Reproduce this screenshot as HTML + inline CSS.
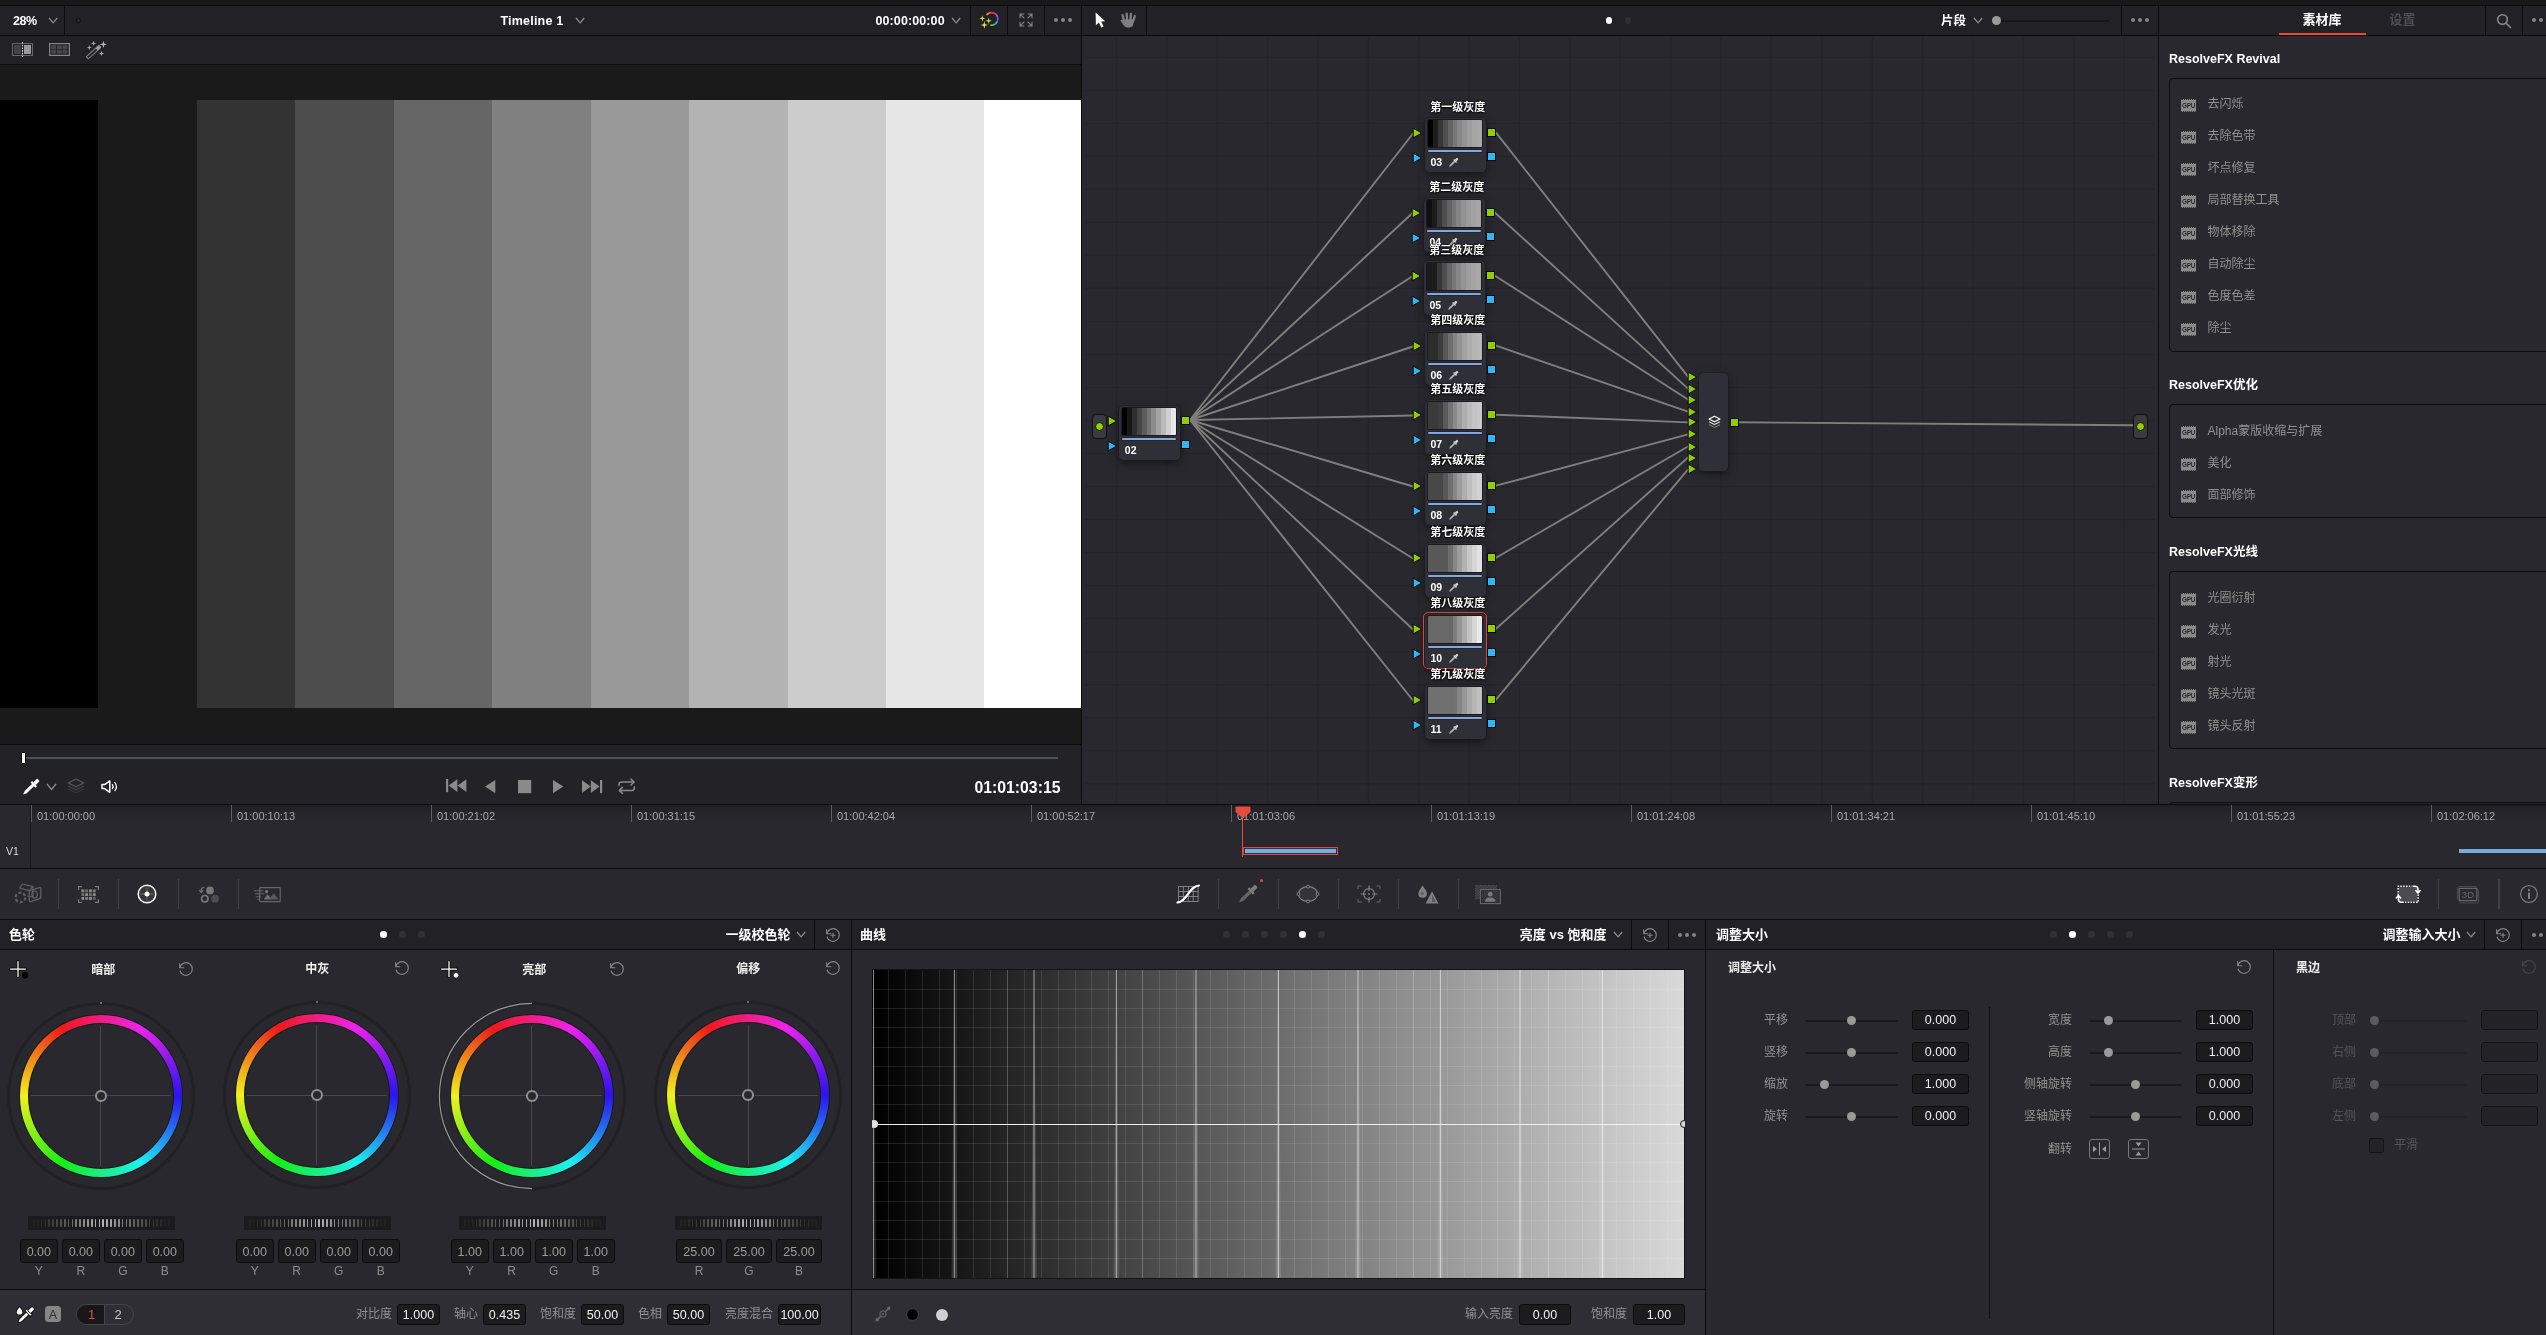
<!DOCTYPE html><html><head><meta charset="utf-8"><title>Color</title><style>
*{box-sizing:border-box;margin:0;padding:0}
html,body{width:2546px;height:1335px;overflow:hidden;background:#28282e}
body{position:relative;font-family:"Liberation Sans","Noto Sans CJK SC",sans-serif;color:#fff;font-size:12px;-webkit-font-smoothing:antialiased}
.a{position:absolute}
.ln{position:absolute;background:#0b0b0d}
.t{position:absolute;white-space:nowrap;line-height:1}
.b{font-weight:bold}
.g{color:#929292}
.num{position:absolute;background:#1c1c1e;border:1px solid #0c0c0e;border-radius:3px;text-align:center;color:#9c9c9c;font-size:12.5px;white-space:nowrap}
.numw{color:#f0f0f0}
.dot{position:absolute;border-radius:50%}
svg{position:absolute;overflow:visible}
</style></head><body><div id="root" style="position:absolute;left:0;top:0;width:2546px;height:1335px;will-change:transform">
<div class="a" style="left:0px;top:0px;width:2546px;height:5px;background:#19191b;"></div>
<div class="ln" style="left:0px;top:5px;width:2546px;height:1px;background:#0b0b0d"></div>
<div class="a" style="left:0px;top:6px;width:2546px;height:29px;background:#212126;"></div>
<div class="ln" style="left:0px;top:35px;width:2546px;height:1px;background:#0b0b0d"></div>
<div class="a" style="left:0px;top:36px;width:1081px;height:28px;background:#212126;"></div>
<div class="ln" style="left:0px;top:64px;width:1081px;height:1px;background:#0b0b0d"></div>
<div class="a" style="left:0px;top:65px;width:1081px;height:679px;background:#1a1a1a;"></div>
<div class="a" style="left:0px;top:100.3px;width:1081px;height:608.2px;background:linear-gradient(90deg,#000000 0.00px, #000000 98.45px,#1a1a1a 98.45px, #1a1a1a 196.90px,#333333 196.90px, #333333 295.35px,#4d4d4d 295.35px, #4d4d4d 393.80px,#666666 393.80px, #666666 492.25px,#808080 492.25px, #808080 590.70px,#999999 590.70px, #999999 689.15px,#b3b3b3 689.15px, #b3b3b3 787.60px,#cccccc 787.60px, #cccccc 886.05px,#e6e6e6 886.05px, #e6e6e6 984.50px,#ffffff 984.50px, #ffffff 1082.95px);"></div>
<div class="ln" style="left:0px;top:744px;width:1081px;height:1px;background:#0b0b0d"></div>
<div class="t b" style="top:14.7px;font-size:12.5px;left:13px;letter-spacing:-0.5px;">28%</div>
<svg style="left:48.9px;top:17.8px" width="8.2" height="4.8"><path d="M0 0 L4.1 4.8 L8.2 0" fill="none" stroke="#8c8c8c" stroke-width="1.3"/></svg>
<div class="ln" style="left:64px;top:6px;width:1px;height:29px;background:#0b0b0d"></div>
<div class="dot" style="left:76px;top:18px;width:5px;height:5px;border:1px solid #0e0e10;background:#2c2c32"></div>
<div class="t b" style="top:14.7px;font-size:12.5px;left:500.5px;letter-spacing:0.2px;">Timeline 1</div>
<svg style="left:576.4px;top:17.8px" width="8.2" height="4.8"><path d="M0 0 L4.1 4.8 L8.2 0" fill="none" stroke="#8c8c8c" stroke-width="1.3"/></svg>
<div class="t b" style="top:14.7px;font-size:12.5px;left:875.5px;letter-spacing:0.1px;">00:00:00:00</div>
<svg style="left:952.4px;top:17.8px" width="8.2" height="4.8"><path d="M0 0 L4.1 4.8 L8.2 0" fill="none" stroke="#8c8c8c" stroke-width="1.3"/></svg>
<div class="ln" style="left:970px;top:6px;width:1px;height:29px;background:#0b0b0d"></div>
<div class="ln" style="left:1007px;top:6px;width:1px;height:29px;background:#0b0b0d"></div>
<div class="ln" style="left:1044px;top:6px;width:1px;height:29px;background:#0b0b0d"></div>
<div class="ln" style="left:1081px;top:6px;width:1px;height:29px;background:#0b0b0d"></div>
<div class="ln" style="left:1146px;top:6px;width:1px;height:29px;background:#0b0b0d"></div>
<div class="dot" style="left:1054px;top:18px;width:4px;height:4px;background:#858585"></div>
<div class="dot" style="left:1061px;top:18px;width:4px;height:4px;background:#858585"></div>
<div class="dot" style="left:1068px;top:18px;width:4px;height:4px;background:#858585"></div>
<svg style="left:0px;top:0px" width="1100" height="40" viewBox="0 0 1100 40" ><path d="M986.60 14.94 A6.3 6.3 0 0 1 988.84 13.19" stroke="#f0a020" stroke-width="1.7" fill="none"/><path d="M988.64 13.29 A6.3 6.3 0 0 1 991.39 12.60" stroke="#ee5a2a" stroke-width="1.7" fill="none"/><path d="M991.17 12.61 A6.3 6.3 0 0 1 993.96 13.10" stroke="#e8303a" stroke-width="1.7" fill="none"/><path d="M993.76 13.02 A6.3 6.3 0 0 1 996.11 14.60" stroke="#e03a8a" stroke-width="1.7" fill="none"/><path d="M995.95 14.45 A6.3 6.3 0 0 1 997.46 16.85" stroke="#c848d8" stroke-width="1.7" fill="none"/><path d="M997.38 16.64 A6.3 6.3 0 0 1 997.78 19.45" stroke="#7a50e8" stroke-width="1.7" fill="none"/><path d="M997.79 19.23 A6.3 6.3 0 0 1 997.01 21.95" stroke="#3a78e8" stroke-width="1.7" fill="none"/><path d="M997.11 21.76 A6.3 6.3 0 0 1 995.29 23.93" stroke="#2ab8d8" stroke-width="1.7" fill="none"/><path d="M995.46 23.80 A6.3 6.3 0 0 1 992.92 25.04" stroke="#30c878" stroke-width="1.7" fill="none"/><path d="M993.13 24.99 A6.3 6.3 0 0 1 990.30 25.08" stroke="#58c83a" stroke-width="1.7" fill="none"/><polygon points="982.30,15.20 982.91,17.69 985.40,18.30 982.91,18.91 982.30,21.40 981.69,18.91 979.20,18.30 981.69,17.69" fill="#f2e64a"/><polygon points="988.70,17.50 989.35,20.15 992.00,20.80 989.35,21.45 988.70,24.10 988.05,21.45 985.40,20.80 988.05,20.15" fill="#f2e64a"/><polygon points="984.30,21.10 985.05,24.15 988.10,24.90 985.05,25.65 984.30,28.70 983.55,25.65 980.50,24.90 983.55,24.15" fill="#f2e64a"/></svg>
<svg style="left:1017.8px;top:12px" width="16" height="16" viewBox="-8 -8 16 16" ><g stroke="#858585" stroke-width="1.1" fill="none"><path d="M-1.6 -1.6 L-6 -6 M-1.8 -6 H-6 V-1.8"/><path d="M1.6 -1.6 L6 -6 M1.8 -6 H6 V-1.8"/><path d="M-1.6 1.6 L-6 6 M-1.8 6 H-6 V1.8"/><path d="M1.6 1.6 L6 6 M1.8 6 H6 V1.8"/></g></svg>
<svg style="left:1095px;top:12.2px" width="12" height="17" viewBox="0 0 12 17" ><path d="M0.6 0.4 L0.9 13.2 L3.9 10.4 L6.3 15.6 L8.6 14.5 L6.2 9.5 L10.2 9.2 Z" fill="#fff"/></svg>
<svg style="left:1119px;top:11px" width="18" height="18" viewBox="-9 -9 18 18" ><g fill="#808080"><rect x="-4.9" y="-6.2" width="2.3" height="8" rx="1.15" transform="rotate(-14 -3.7 2)"/><rect x="-1.9" y="-7.6" width="2.3" height="9" rx="1.15" transform="rotate(-4 -0.7 2)"/><rect x="1.0" y="-7.3" width="2.3" height="9" rx="1.15" transform="rotate(6 2.1 2)"/><rect x="3.9" y="-5.4" width="2.2" height="8" rx="1.1" transform="rotate(17 5 2)"/><path d="M-7.6 0.4 Q-6.6 -0.8 -5.4 0.2 L-3.4 2.6 L-4 -0.5 L5.6 -0.8 L5.4 3.6 Q5 7.4 1.4 7.5 L-0.6 7.5 Q-3 7.4 -4.4 5.2 Z"/></g></svg>
<svg style="left:12px;top:41.7px" width="21" height="16" viewBox="0 0 21 16" ><rect x="0.5" y="1.5" width="20" height="12" fill="none" stroke="#66666a" stroke-width="1"/><rect x="2" y="3" width="7" height="9" fill="#434347"/><rect x="12" y="3" width="7" height="9" fill="#9a9a9a"/><path d="M10.5 0 V15.5" stroke="#d8d8d8" stroke-width="1.1" stroke-dasharray="1.6 1.1"/></svg>
<svg style="left:49px;top:43px" width="21" height="13" viewBox="0 0 21 13" ><rect x="0.6" y="0.6" width="19.8" height="11.8" fill="none" stroke="#858585" stroke-width="1.2"/><rect x="2.2" y="2.2" width="4.9" height="3.9" fill="#47474b"/><rect x="7.9" y="2.2" width="4.9" height="3.9" fill="#47474b"/><rect x="13.600000000000001" y="2.2" width="4.9" height="3.9" fill="#47474b"/><rect x="2.2" y="6.8" width="4.9" height="3.9" fill="#47474b"/><rect x="7.9" y="6.8" width="4.9" height="3.9" fill="#47474b"/><rect x="13.600000000000001" y="6.8" width="4.9" height="3.9" fill="#47474b"/></svg>
<svg style="left:86px;top:40px" width="20" height="20" viewBox="-10 -10 20 20" ><g transform="translate(-2.4 2.1) rotate(-42)"><rect x="-8.5" y="-1.5" width="17" height="3" rx="0.6" fill="none" stroke="#8a8a8a" stroke-width="1"/><rect x="4.2" y="-1.5" width="4.3" height="3" fill="#a0a0a0"/></g><polygon points="-2.40,-9.40 -1.77,-7.33 0.30,-6.70 -1.77,-6.07 -2.40,-4.00 -3.03,-6.07 -5.10,-6.70 -3.03,-7.33" fill="#aaaaaa"/><polygon points="-6.70,-5.10 -6.07,-3.03 -4.00,-2.40 -6.07,-1.77 -6.70,0.30 -7.33,-1.77 -9.40,-2.40 -7.33,-3.03" fill="#aaaaaa"/><polygon points="7.40,-9.20 8.24,-6.44 11.00,-5.60 8.24,-4.76 7.40,-2.00 6.56,-4.76 3.80,-5.60 6.56,-6.44" fill="#b4b4b4"/><polygon points="5.50,0.70 6.15,2.85 8.30,3.50 6.15,4.15 5.50,6.30 4.85,4.15 2.70,3.50 4.85,2.85" fill="#aaaaaa"/></svg>
<div class="a" style="left:1082px;top:36px;width:1076px;height:768px;background:#28282e;"></div>
<div class="ln" style="left:1081px;top:36px;width:1px;height:768px;background:#0b0b0d"></div>
<svg style="left:0;top:0" width="2546" height="1335" stroke="#242429" stroke-width="1"><line x1="1116.5" y1="36" x2="1116.5" y2="804"/><line x1="1166.9" y1="36" x2="1166.9" y2="804"/><line x1="1217.3" y1="36" x2="1217.3" y2="804"/><line x1="1267.6" y1="36" x2="1267.6" y2="804"/><line x1="1318.0" y1="36" x2="1318.0" y2="804"/><line x1="1368.4" y1="36" x2="1368.4" y2="804"/><line x1="1418.8" y1="36" x2="1418.8" y2="804"/><line x1="1469.2" y1="36" x2="1469.2" y2="804"/><line x1="1519.5" y1="36" x2="1519.5" y2="804"/><line x1="1569.9" y1="36" x2="1569.9" y2="804"/><line x1="1620.3" y1="36" x2="1620.3" y2="804"/><line x1="1670.7" y1="36" x2="1670.7" y2="804"/><line x1="1721.1" y1="36" x2="1721.1" y2="804"/><line x1="1771.4" y1="36" x2="1771.4" y2="804"/><line x1="1821.8" y1="36" x2="1821.8" y2="804"/><line x1="1872.2" y1="36" x2="1872.2" y2="804"/><line x1="1922.6" y1="36" x2="1922.6" y2="804"/><line x1="1973.0" y1="36" x2="1973.0" y2="804"/><line x1="2023.3" y1="36" x2="2023.3" y2="804"/><line x1="2073.7" y1="36" x2="2073.7" y2="804"/><line x1="2124.1" y1="36" x2="2124.1" y2="804"/><line x1="1085" y1="57.3" x2="2155" y2="57.3"/><line x1="1085" y1="90.3" x2="2155" y2="90.3"/><line x1="1085" y1="123.3" x2="2155" y2="123.3"/><line x1="1085" y1="156.4" x2="2155" y2="156.4"/><line x1="1085" y1="189.4" x2="2155" y2="189.4"/><line x1="1085" y1="222.4" x2="2155" y2="222.4"/><line x1="1085" y1="255.4" x2="2155" y2="255.4"/><line x1="1085" y1="288.4" x2="2155" y2="288.4"/><line x1="1085" y1="321.5" x2="2155" y2="321.5"/><line x1="1085" y1="354.5" x2="2155" y2="354.5"/><line x1="1085" y1="387.5" x2="2155" y2="387.5"/><line x1="1085" y1="420.5" x2="2155" y2="420.5"/><line x1="1085" y1="453.5" x2="2155" y2="453.5"/><line x1="1085" y1="486.6" x2="2155" y2="486.6"/><line x1="1085" y1="519.6" x2="2155" y2="519.6"/><line x1="1085" y1="552.6" x2="2155" y2="552.6"/><line x1="1085" y1="585.6" x2="2155" y2="585.6"/><line x1="1085" y1="618.6" x2="2155" y2="618.6"/><line x1="1085" y1="651.7" x2="2155" y2="651.7"/><line x1="1085" y1="684.7" x2="2155" y2="684.7"/><line x1="1085" y1="717.7" x2="2155" y2="717.7"/><line x1="1085" y1="750.7" x2="2155" y2="750.7"/><line x1="1085" y1="783.7" x2="2155" y2="783.7"/></svg>
<div class="dot" style="left:1605.8px;top:17.3px;width:6.4px;height:6.4px;background:#ffffff"></div>
<div class="dot" style="left:1624.8px;top:17.3px;width:6.4px;height:6.4px;background:#2e2e33"></div>
<div class="t b" style="top:14.7px;font-size:12.5px;left:1941px;">片段</div>
<svg style="left:1973.9px;top:17.8px" width="8.2" height="4.8"><path d="M0 0 L4.1 4.8 L8.2 0" fill="none" stroke="#8c8c8c" stroke-width="1.3"/></svg>
<div class="a" style="left:1996px;top:20px;width:113px;height:2px;background:#161618;border-radius:1px"></div>
<div class="dot" style="left:1992.0px;top:16.0px;width:9.0px;height:9.0px;background:#9a9a9a"></div>
<div class="ln" style="left:2121px;top:6px;width:1px;height:29px;background:#0b0b0d"></div>
<div class="ln" style="left:2158px;top:6px;width:1px;height:29px;background:#0b0b0d"></div>
<div class="dot" style="left:2131px;top:18px;width:4px;height:4px;background:#858585"></div>
<div class="dot" style="left:2138px;top:18px;width:4px;height:4px;background:#858585"></div>
<div class="dot" style="left:2145px;top:18px;width:4px;height:4px;background:#858585"></div>
<div class="ln" style="left:2158px;top:36px;width:1px;height:768px;background:#0b0b0d"></div>
<svg style="left:0;top:0" width="2546" height="1335" stroke="#7f7f7f" stroke-width="1.9" stroke-linecap="round"><line x1="1190" y1="420" x2="1413" y2="133.5"/><line x1="1496" y1="132.7" x2="1688" y2="376.7"/><line x1="1190" y1="420" x2="1412" y2="213.5"/><line x1="1495" y1="212.7" x2="1688" y2="388.6"/><line x1="1190" y1="420" x2="1412" y2="276.5"/><line x1="1495" y1="275.7" x2="1688" y2="399.5"/><line x1="1190" y1="420" x2="1413" y2="346.5"/><line x1="1496" y1="345.7" x2="1688" y2="411.6"/><line x1="1190" y1="420" x2="1413" y2="415.5"/><line x1="1496" y1="414.7" x2="1688" y2="422.4"/><line x1="1190" y1="420" x2="1413" y2="486.5"/><line x1="1496" y1="485.7" x2="1688" y2="434.4"/><line x1="1190" y1="420" x2="1413" y2="558.5"/><line x1="1496" y1="557.7" x2="1688" y2="446.5"/><line x1="1190" y1="420" x2="1413" y2="629.5"/><line x1="1496" y1="628.7" x2="1688" y2="457.5"/><line x1="1190" y1="420" x2="1413" y2="700.5"/><line x1="1496" y1="699.7" x2="1688" y2="469.3"/><line x1="1738" y1="422.3" x2="2133" y2="425.3"/></svg>
<div class="a" style="left:1424.5px;top:117.5px;width:61px;height:54px;background:#2f3037;border-radius:4.5px;box-shadow:0 0 0 .6px #1c1c20,0 3px 8px rgba(0,0,0,.5)"></div>
<div class="a" style="left:1428.0px;top:120.1px;width:54px;height:26.8px;background:linear-gradient(90deg,rgb(0,0,0) 0.00%, rgb(0,0,0) 9.09%,rgb(29,29,29) 9.09%, rgb(29,29,29) 18.18%,rgb(55,55,55) 18.18%, rgb(55,55,55) 27.27%,rgb(79,79,79) 27.27%, rgb(79,79,79) 36.36%,rgb(101,101,101) 36.36%, rgb(101,101,101) 45.45%,rgb(119,119,119) 45.45%, rgb(119,119,119) 54.55%,rgb(135,135,135) 54.55%, rgb(135,135,135) 63.64%,rgb(148,148,148) 63.64%, rgb(148,148,148) 72.73%,rgb(158,158,158) 72.73%, rgb(158,158,158) 81.82%,rgb(165,165,165) 81.82%, rgb(165,165,165) 90.91%,rgb(168,168,168) 90.91%, rgb(168,168,168) 100.00%);border-radius:1px;box-shadow:0 0 0 1px #1a1a1e"></div>
<div class="a" style="left:1428.0px;top:149.5px;width:54px;height:2px;background:#84a7e2;border-radius:1px;box-shadow:0 0 0 .5px #1a1a1e"></div>
<div class="t b" style="top:157.2px;font-size:10.5px;left:1430.5px;color:#fff;">03</div>
<svg style="left:1447.0px;top:155.5px" width="13" height="13" viewBox="-6.5 -6.5 13 13"><g transform="scale(.56) rotate(-43.8)" fill="#d4d4d4"><path d="M-10.4 -0.35 L-7.4 -1.6 L3 -1.6 L3 1.6 L-7.4 1.6 L-10.4 0.35 Z" fill="#b4b4b4"/><rect x="2.7" y="-3.8" width="2.4" height="7.6"/><path d="M4.9 -2 H9.4 Q10.4 -2 10.4 -1 V1 Q10.4 2 9.4 2 H4.9 Z"/></g></svg>
<svg style="left:1412.0px;top:127.30000000000001px" width="11" height="12"><path d="M1.2 1.2 L9.8 6 L1.2 10.8 Z" fill="#8fce00" stroke="#0c0c0e" stroke-width="1" stroke-linejoin="round"/></svg>
<svg style="left:1412.0px;top:151.5px" width="11" height="12"><path d="M1.2 1.2 L9.8 6 L1.2 10.8 Z" fill="#2eb6f5" stroke="#0c0c0e" stroke-width="1" stroke-linejoin="round"/></svg>
<div class="a" style="left:1487.0px;top:127.9px;width:9px;height:9px;background:#8fce00;border:1px solid #0c0c0e"></div>
<div class="a" style="left:1487.0px;top:152.3px;width:9px;height:9px;background:#2eb6f5;border:1px solid #0c0c0e"></div>
<div class="t b" style="top:101.6px;font-size:11px;left:1457.8px;transform:translateX(-50%);text-shadow:0 0 2px #000,0 1px 2px #000,0 0 1px #000">第一级灰度</div>
<div class="a" style="left:1423.5px;top:197.5px;width:61px;height:54px;background:#2f3037;border-radius:4.5px;box-shadow:0 0 0 .6px #1c1c20,0 3px 8px rgba(0,0,0,.5)"></div>
<div class="a" style="left:1427.0px;top:200.1px;width:54px;height:26.8px;background:linear-gradient(90deg,rgb(15,15,15) 0.00%, rgb(15,15,15) 9.09%,rgb(28,28,28) 9.09%, rgb(28,28,28) 18.18%,rgb(54,54,54) 18.18%, rgb(54,54,54) 27.27%,rgb(78,78,78) 27.27%, rgb(78,78,78) 36.36%,rgb(99,99,99) 36.36%, rgb(99,99,99) 45.45%,rgb(117,117,117) 45.45%, rgb(117,117,117) 54.55%,rgb(133,133,133) 54.55%, rgb(133,133,133) 63.64%,rgb(146,146,146) 63.64%, rgb(146,146,146) 72.73%,rgb(155,155,155) 72.73%, rgb(155,155,155) 81.82%,rgb(162,162,162) 81.82%, rgb(162,162,162) 90.91%,rgb(165,165,165) 90.91%, rgb(165,165,165) 100.00%);border-radius:1px;box-shadow:0 0 0 1px #1a1a1e"></div>
<div class="a" style="left:1427.0px;top:229.5px;width:54px;height:2px;background:#84a7e2;border-radius:1px;box-shadow:0 0 0 .5px #1a1a1e"></div>
<div class="t b" style="top:237.2px;font-size:10.5px;left:1429.5px;color:#fff;">04</div>
<svg style="left:1446.0px;top:235.5px" width="13" height="13" viewBox="-6.5 -6.5 13 13"><g transform="scale(.56) rotate(-43.8)" fill="#d4d4d4"><path d="M-10.4 -0.35 L-7.4 -1.6 L3 -1.6 L3 1.6 L-7.4 1.6 L-10.4 0.35 Z" fill="#b4b4b4"/><rect x="2.7" y="-3.8" width="2.4" height="7.6"/><path d="M4.9 -2 H9.4 Q10.4 -2 10.4 -1 V1 Q10.4 2 9.4 2 H4.9 Z"/></g></svg>
<svg style="left:1411.0px;top:207.3px" width="11" height="12"><path d="M1.2 1.2 L9.8 6 L1.2 10.8 Z" fill="#8fce00" stroke="#0c0c0e" stroke-width="1" stroke-linejoin="round"/></svg>
<svg style="left:1411.0px;top:231.5px" width="11" height="12"><path d="M1.2 1.2 L9.8 6 L1.2 10.8 Z" fill="#2eb6f5" stroke="#0c0c0e" stroke-width="1" stroke-linejoin="round"/></svg>
<div class="a" style="left:1486.0px;top:207.9px;width:9px;height:9px;background:#8fce00;border:1px solid #0c0c0e"></div>
<div class="a" style="left:1486.0px;top:232.3px;width:9px;height:9px;background:#2eb6f5;border:1px solid #0c0c0e"></div>
<div class="t b" style="top:181.6px;font-size:11px;left:1456.8px;transform:translateX(-50%);text-shadow:0 0 2px #000,0 1px 2px #000,0 0 1px #000">第二级灰度</div>
<div class="a" style="left:1423.5px;top:260.5px;width:61px;height:54px;background:#2f3037;border-radius:4.5px;box-shadow:0 0 0 .6px #1c1c20,0 3px 8px rgba(0,0,0,.5)"></div>
<div class="a" style="left:1427.0px;top:263.1px;width:54px;height:26.8px;background:linear-gradient(90deg,rgb(26,26,26) 0.00%, rgb(26,26,26) 9.09%,rgb(29,29,29) 9.09%, rgb(29,29,29) 18.18%,rgb(55,55,55) 18.18%, rgb(55,55,55) 27.27%,rgb(79,79,79) 27.27%, rgb(79,79,79) 36.36%,rgb(101,101,101) 36.36%, rgb(101,101,101) 45.45%,rgb(119,119,119) 45.45%, rgb(119,119,119) 54.55%,rgb(135,135,135) 54.55%, rgb(135,135,135) 63.64%,rgb(148,148,148) 63.64%, rgb(148,148,148) 72.73%,rgb(158,158,158) 72.73%, rgb(158,158,158) 81.82%,rgb(165,165,165) 81.82%, rgb(165,165,165) 90.91%,rgb(168,168,168) 90.91%, rgb(168,168,168) 100.00%);border-radius:1px;box-shadow:0 0 0 1px #1a1a1e"></div>
<div class="a" style="left:1427.0px;top:292.5px;width:54px;height:2px;background:#84a7e2;border-radius:1px;box-shadow:0 0 0 .5px #1a1a1e"></div>
<div class="t b" style="top:300.1px;font-size:10.5px;left:1429.5px;color:#fff;">05</div>
<svg style="left:1446.0px;top:298.5px" width="13" height="13" viewBox="-6.5 -6.5 13 13"><g transform="scale(.56) rotate(-43.8)" fill="#d4d4d4"><path d="M-10.4 -0.35 L-7.4 -1.6 L3 -1.6 L3 1.6 L-7.4 1.6 L-10.4 0.35 Z" fill="#b4b4b4"/><rect x="2.7" y="-3.8" width="2.4" height="7.6"/><path d="M4.9 -2 H9.4 Q10.4 -2 10.4 -1 V1 Q10.4 2 9.4 2 H4.9 Z"/></g></svg>
<svg style="left:1411.0px;top:270.3px" width="11" height="12"><path d="M1.2 1.2 L9.8 6 L1.2 10.8 Z" fill="#8fce00" stroke="#0c0c0e" stroke-width="1" stroke-linejoin="round"/></svg>
<svg style="left:1411.0px;top:294.5px" width="11" height="12"><path d="M1.2 1.2 L9.8 6 L1.2 10.8 Z" fill="#2eb6f5" stroke="#0c0c0e" stroke-width="1" stroke-linejoin="round"/></svg>
<div class="a" style="left:1486.0px;top:270.9px;width:9px;height:9px;background:#8fce00;border:1px solid #0c0c0e"></div>
<div class="a" style="left:1486.0px;top:295.3px;width:9px;height:9px;background:#2eb6f5;border:1px solid #0c0c0e"></div>
<div class="t b" style="top:244.6px;font-size:11px;left:1456.8px;transform:translateX(-50%);text-shadow:0 0 2px #000,0 1px 2px #000,0 0 1px #000">第三级灰度</div>
<div class="a" style="left:1424.5px;top:330.5px;width:61px;height:54px;background:#2f3037;border-radius:4.5px;box-shadow:0 0 0 .6px #1c1c20,0 3px 8px rgba(0,0,0,.5)"></div>
<div class="a" style="left:1428.0px;top:333.1px;width:54px;height:26.8px;background:linear-gradient(90deg,rgb(44,44,44) 0.00%, rgb(44,44,44) 9.09%,rgb(44,44,44) 9.09%, rgb(44,44,44) 18.18%,rgb(60,60,60) 18.18%, rgb(60,60,60) 27.27%,rgb(87,87,87) 27.27%, rgb(87,87,87) 36.36%,rgb(110,110,110) 36.36%, rgb(110,110,110) 45.45%,rgb(131,131,131) 45.45%, rgb(131,131,131) 54.55%,rgb(148,148,148) 54.55%, rgb(148,148,148) 63.64%,rgb(162,162,162) 63.64%, rgb(162,162,162) 72.73%,rgb(173,173,173) 72.73%, rgb(173,173,173) 81.82%,rgb(181,181,181) 81.82%, rgb(181,181,181) 90.91%,rgb(184,184,184) 90.91%, rgb(184,184,184) 100.00%);border-radius:1px;box-shadow:0 0 0 1px #1a1a1e"></div>
<div class="a" style="left:1428.0px;top:362.5px;width:54px;height:2px;background:#84a7e2;border-radius:1px;box-shadow:0 0 0 .5px #1a1a1e"></div>
<div class="t b" style="top:370.1px;font-size:10.5px;left:1430.5px;color:#fff;">06</div>
<svg style="left:1447.0px;top:368.5px" width="13" height="13" viewBox="-6.5 -6.5 13 13"><g transform="scale(.56) rotate(-43.8)" fill="#d4d4d4"><path d="M-10.4 -0.35 L-7.4 -1.6 L3 -1.6 L3 1.6 L-7.4 1.6 L-10.4 0.35 Z" fill="#b4b4b4"/><rect x="2.7" y="-3.8" width="2.4" height="7.6"/><path d="M4.9 -2 H9.4 Q10.4 -2 10.4 -1 V1 Q10.4 2 9.4 2 H4.9 Z"/></g></svg>
<svg style="left:1412.0px;top:340.3px" width="11" height="12"><path d="M1.2 1.2 L9.8 6 L1.2 10.8 Z" fill="#8fce00" stroke="#0c0c0e" stroke-width="1" stroke-linejoin="round"/></svg>
<svg style="left:1412.0px;top:364.5px" width="11" height="12"><path d="M1.2 1.2 L9.8 6 L1.2 10.8 Z" fill="#2eb6f5" stroke="#0c0c0e" stroke-width="1" stroke-linejoin="round"/></svg>
<div class="a" style="left:1487.0px;top:340.9px;width:9px;height:9px;background:#8fce00;border:1px solid #0c0c0e"></div>
<div class="a" style="left:1487.0px;top:365.3px;width:9px;height:9px;background:#2eb6f5;border:1px solid #0c0c0e"></div>
<div class="t b" style="top:314.6px;font-size:11px;left:1457.8px;transform:translateX(-50%);text-shadow:0 0 2px #000,0 1px 2px #000,0 0 1px #000">第四级灰度</div>
<div class="a" style="left:1424.5px;top:399.5px;width:61px;height:54px;background:#2f3037;border-radius:4.5px;box-shadow:0 0 0 .6px #1c1c20,0 3px 8px rgba(0,0,0,.5)"></div>
<div class="a" style="left:1428.0px;top:402.1px;width:54px;height:26.8px;background:linear-gradient(90deg,rgb(58,58,58) 0.00%, rgb(58,58,58) 9.09%,rgb(58,58,58) 9.09%, rgb(58,58,58) 18.18%,rgb(63,63,63) 18.18%, rgb(63,63,63) 27.27%,rgb(90,90,90) 27.27%, rgb(90,90,90) 36.36%,rgb(116,116,116) 36.36%, rgb(116,116,116) 45.45%,rgb(138,138,138) 45.45%, rgb(138,138,138) 54.55%,rgb(157,157,157) 54.55%, rgb(157,157,157) 63.64%,rgb(174,174,174) 63.64%, rgb(174,174,174) 72.73%,rgb(187,187,187) 72.73%, rgb(187,187,187) 81.82%,rgb(196,196,196) 81.82%, rgb(196,196,196) 90.91%,rgb(200,200,200) 90.91%, rgb(200,200,200) 100.00%);border-radius:1px;box-shadow:0 0 0 1px #1a1a1e"></div>
<div class="a" style="left:1428.0px;top:431.5px;width:54px;height:2px;background:#84a7e2;border-radius:1px;box-shadow:0 0 0 .5px #1a1a1e"></div>
<div class="t b" style="top:439.1px;font-size:10.5px;left:1430.5px;color:#fff;">07</div>
<svg style="left:1447.0px;top:437.5px" width="13" height="13" viewBox="-6.5 -6.5 13 13"><g transform="scale(.56) rotate(-43.8)" fill="#d4d4d4"><path d="M-10.4 -0.35 L-7.4 -1.6 L3 -1.6 L3 1.6 L-7.4 1.6 L-10.4 0.35 Z" fill="#b4b4b4"/><rect x="2.7" y="-3.8" width="2.4" height="7.6"/><path d="M4.9 -2 H9.4 Q10.4 -2 10.4 -1 V1 Q10.4 2 9.4 2 H4.9 Z"/></g></svg>
<svg style="left:1412.0px;top:409.3px" width="11" height="12"><path d="M1.2 1.2 L9.8 6 L1.2 10.8 Z" fill="#8fce00" stroke="#0c0c0e" stroke-width="1" stroke-linejoin="round"/></svg>
<svg style="left:1412.0px;top:433.5px" width="11" height="12"><path d="M1.2 1.2 L9.8 6 L1.2 10.8 Z" fill="#2eb6f5" stroke="#0c0c0e" stroke-width="1" stroke-linejoin="round"/></svg>
<div class="a" style="left:1487.0px;top:409.9px;width:9px;height:9px;background:#8fce00;border:1px solid #0c0c0e"></div>
<div class="a" style="left:1487.0px;top:434.3px;width:9px;height:9px;background:#2eb6f5;border:1px solid #0c0c0e"></div>
<div class="t b" style="top:383.6px;font-size:11px;left:1457.8px;transform:translateX(-50%);text-shadow:0 0 2px #000,0 1px 2px #000,0 0 1px #000">第五级灰度</div>
<div class="a" style="left:1424.5px;top:470.5px;width:61px;height:54px;background:#2f3037;border-radius:4.5px;box-shadow:0 0 0 .6px #1c1c20,0 3px 8px rgba(0,0,0,.5)"></div>
<div class="a" style="left:1428.0px;top:473.1px;width:54px;height:26.8px;background:linear-gradient(90deg,rgb(72,72,72) 0.00%, rgb(72,72,72) 9.09%,rgb(72,72,72) 9.09%, rgb(72,72,72) 18.18%,rgb(72,72,72) 18.18%, rgb(72,72,72) 27.27%,rgb(87,87,87) 27.27%, rgb(87,87,87) 36.36%,rgb(112,112,112) 36.36%, rgb(112,112,112) 45.45%,rgb(135,135,135) 45.45%, rgb(135,135,135) 54.55%,rgb(156,156,156) 54.55%, rgb(156,156,156) 63.64%,rgb(175,175,175) 63.64%, rgb(175,175,175) 72.73%,rgb(191,191,191) 72.73%, rgb(191,191,191) 81.82%,rgb(203,203,203) 81.82%, rgb(203,203,203) 90.91%,rgb(210,210,210) 90.91%, rgb(210,210,210) 100.00%);border-radius:1px;box-shadow:0 0 0 1px #1a1a1e"></div>
<div class="a" style="left:1428.0px;top:502.5px;width:54px;height:2px;background:#84a7e2;border-radius:1px;box-shadow:0 0 0 .5px #1a1a1e"></div>
<div class="t b" style="top:510.1px;font-size:10.5px;left:1430.5px;color:#fff;">08</div>
<svg style="left:1447.0px;top:508.5px" width="13" height="13" viewBox="-6.5 -6.5 13 13"><g transform="scale(.56) rotate(-43.8)" fill="#d4d4d4"><path d="M-10.4 -0.35 L-7.4 -1.6 L3 -1.6 L3 1.6 L-7.4 1.6 L-10.4 0.35 Z" fill="#b4b4b4"/><rect x="2.7" y="-3.8" width="2.4" height="7.6"/><path d="M4.9 -2 H9.4 Q10.4 -2 10.4 -1 V1 Q10.4 2 9.4 2 H4.9 Z"/></g></svg>
<svg style="left:1412.0px;top:480.3px" width="11" height="12"><path d="M1.2 1.2 L9.8 6 L1.2 10.8 Z" fill="#8fce00" stroke="#0c0c0e" stroke-width="1" stroke-linejoin="round"/></svg>
<svg style="left:1412.0px;top:504.5px" width="11" height="12"><path d="M1.2 1.2 L9.8 6 L1.2 10.8 Z" fill="#2eb6f5" stroke="#0c0c0e" stroke-width="1" stroke-linejoin="round"/></svg>
<div class="a" style="left:1487.0px;top:480.9px;width:9px;height:9px;background:#8fce00;border:1px solid #0c0c0e"></div>
<div class="a" style="left:1487.0px;top:505.3px;width:9px;height:9px;background:#2eb6f5;border:1px solid #0c0c0e"></div>
<div class="t b" style="top:454.6px;font-size:11px;left:1457.8px;transform:translateX(-50%);text-shadow:0 0 2px #000,0 1px 2px #000,0 0 1px #000">第六级灰度</div>
<div class="a" style="left:1424.5px;top:542.5px;width:61px;height:54px;background:#2f3037;border-radius:4.5px;box-shadow:0 0 0 .6px #1c1c20,0 3px 8px rgba(0,0,0,.5)"></div>
<div class="a" style="left:1428.0px;top:545.1px;width:54px;height:26.8px;background:linear-gradient(90deg,rgb(88,88,88) 0.00%, rgb(88,88,88) 9.09%,rgb(88,88,88) 9.09%, rgb(88,88,88) 18.18%,rgb(88,88,88) 18.18%, rgb(88,88,88) 27.27%,rgb(88,88,88) 27.27%, rgb(88,88,88) 36.36%,rgb(109,109,109) 36.36%, rgb(109,109,109) 45.45%,rgb(134,134,134) 45.45%, rgb(134,134,134) 54.55%,rgb(157,157,157) 54.55%, rgb(157,157,157) 63.64%,rgb(178,178,178) 63.64%, rgb(178,178,178) 72.73%,rgb(198,198,198) 72.73%, rgb(198,198,198) 81.82%,rgb(214,214,214) 81.82%, rgb(214,214,214) 90.91%,rgb(226,226,226) 90.91%, rgb(226,226,226) 100.00%);border-radius:1px;box-shadow:0 0 0 1px #1a1a1e"></div>
<div class="a" style="left:1428.0px;top:574.5px;width:54px;height:2px;background:#84a7e2;border-radius:1px;box-shadow:0 0 0 .5px #1a1a1e"></div>
<div class="t b" style="top:582.1px;font-size:10.5px;left:1430.5px;color:#fff;">09</div>
<svg style="left:1447.0px;top:580.5px" width="13" height="13" viewBox="-6.5 -6.5 13 13"><g transform="scale(.56) rotate(-43.8)" fill="#d4d4d4"><path d="M-10.4 -0.35 L-7.4 -1.6 L3 -1.6 L3 1.6 L-7.4 1.6 L-10.4 0.35 Z" fill="#b4b4b4"/><rect x="2.7" y="-3.8" width="2.4" height="7.6"/><path d="M4.9 -2 H9.4 Q10.4 -2 10.4 -1 V1 Q10.4 2 9.4 2 H4.9 Z"/></g></svg>
<svg style="left:1412.0px;top:552.3px" width="11" height="12"><path d="M1.2 1.2 L9.8 6 L1.2 10.8 Z" fill="#8fce00" stroke="#0c0c0e" stroke-width="1" stroke-linejoin="round"/></svg>
<svg style="left:1412.0px;top:576.5px" width="11" height="12"><path d="M1.2 1.2 L9.8 6 L1.2 10.8 Z" fill="#2eb6f5" stroke="#0c0c0e" stroke-width="1" stroke-linejoin="round"/></svg>
<div class="a" style="left:1487.0px;top:552.9px;width:9px;height:9px;background:#8fce00;border:1px solid #0c0c0e"></div>
<div class="a" style="left:1487.0px;top:577.3px;width:9px;height:9px;background:#2eb6f5;border:1px solid #0c0c0e"></div>
<div class="t b" style="top:526.6px;font-size:11px;left:1457.8px;transform:translateX(-50%);text-shadow:0 0 2px #000,0 1px 2px #000,0 0 1px #000">第七级灰度</div>
<div class="a" style="left:1424.5px;top:613.5px;width:61px;height:54px;background:#2f3037;border-radius:4.5px;box-shadow:0 0 0 .6px #1c1c20,0 3px 8px rgba(0,0,0,.5)"></div>
<div class="a" style="left:1423.0px;top:612.0px;width:64px;height:57px;border:1.2px solid #d9453a;border-radius:5px"></div>
<div class="a" style="left:1428.0px;top:616.1px;width:54px;height:26.8px;background:linear-gradient(90deg,rgb(104,104,104) 0.00%, rgb(104,104,104) 9.09%,rgb(104,104,104) 9.09%, rgb(104,104,104) 18.18%,rgb(104,104,104) 18.18%, rgb(104,104,104) 27.27%,rgb(104,104,104) 27.27%, rgb(104,104,104) 36.36%,rgb(104,104,104) 36.36%, rgb(104,104,104) 45.45%,rgb(124,124,124) 45.45%, rgb(124,124,124) 54.55%,rgb(148,148,148) 54.55%, rgb(148,148,148) 63.64%,rgb(171,171,171) 63.64%, rgb(171,171,171) 72.73%,rgb(194,194,194) 72.73%, rgb(194,194,194) 81.82%,rgb(215,215,215) 81.82%, rgb(215,215,215) 90.91%,rgb(234,234,234) 90.91%, rgb(234,234,234) 100.00%);border-radius:1px;box-shadow:0 0 0 1px #1a1a1e"></div>
<div class="a" style="left:1428.0px;top:645.5px;width:54px;height:2px;background:#84a7e2;border-radius:1px;box-shadow:0 0 0 .5px #1a1a1e"></div>
<div class="t b" style="top:653.1px;font-size:10.5px;left:1430.5px;color:#fff;">10</div>
<svg style="left:1447.0px;top:651.5px" width="13" height="13" viewBox="-6.5 -6.5 13 13"><g transform="scale(.56) rotate(-43.8)" fill="#d4d4d4"><path d="M-10.4 -0.35 L-7.4 -1.6 L3 -1.6 L3 1.6 L-7.4 1.6 L-10.4 0.35 Z" fill="#b4b4b4"/><rect x="2.7" y="-3.8" width="2.4" height="7.6"/><path d="M4.9 -2 H9.4 Q10.4 -2 10.4 -1 V1 Q10.4 2 9.4 2 H4.9 Z"/></g></svg>
<svg style="left:1412.0px;top:623.3px" width="11" height="12"><path d="M1.2 1.2 L9.8 6 L1.2 10.8 Z" fill="#8fce00" stroke="#0c0c0e" stroke-width="1" stroke-linejoin="round"/></svg>
<svg style="left:1412.0px;top:647.5px" width="11" height="12"><path d="M1.2 1.2 L9.8 6 L1.2 10.8 Z" fill="#2eb6f5" stroke="#0c0c0e" stroke-width="1" stroke-linejoin="round"/></svg>
<div class="a" style="left:1487.0px;top:623.9px;width:9px;height:9px;background:#8fce00;border:1px solid #0c0c0e"></div>
<div class="a" style="left:1487.0px;top:648.3px;width:9px;height:9px;background:#2eb6f5;border:1px solid #0c0c0e"></div>
<div class="t b" style="top:597.6px;font-size:11px;left:1457.8px;transform:translateX(-50%);text-shadow:0 0 2px #000,0 1px 2px #000,0 0 1px #000">第八级灰度</div>
<div class="a" style="left:1424.5px;top:684.5px;width:61px;height:54px;background:#2f3037;border-radius:4.5px;box-shadow:0 0 0 .6px #1c1c20,0 3px 8px rgba(0,0,0,.5)"></div>
<div class="a" style="left:1428.0px;top:687.1px;width:54px;height:26.8px;background:linear-gradient(90deg,rgb(112,112,112) 0.00%, rgb(112,112,112) 9.09%,rgb(112,112,112) 9.09%, rgb(112,112,112) 18.18%,rgb(112,112,112) 18.18%, rgb(112,112,112) 27.27%,rgb(112,112,112) 27.27%, rgb(112,112,112) 36.36%,rgb(112,112,112) 36.36%, rgb(112,112,112) 45.45%,rgb(114,114,114) 45.45%, rgb(114,114,114) 54.55%,rgb(133,133,133) 54.55%, rgb(133,133,133) 63.64%,rgb(151,151,151) 63.64%, rgb(151,151,151) 72.73%,rgb(168,168,168) 72.73%, rgb(168,168,168) 81.82%,rgb(182,182,182) 81.82%, rgb(182,182,182) 90.91%,rgb(192,192,192) 90.91%, rgb(192,192,192) 100.00%);border-radius:1px;box-shadow:0 0 0 1px #1a1a1e"></div>
<div class="a" style="left:1428.0px;top:716.5px;width:54px;height:2px;background:#84a7e2;border-radius:1px;box-shadow:0 0 0 .5px #1a1a1e"></div>
<div class="t b" style="top:724.1px;font-size:10.5px;left:1430.5px;color:#fff;">11</div>
<svg style="left:1447.0px;top:722.5px" width="13" height="13" viewBox="-6.5 -6.5 13 13"><g transform="scale(.56) rotate(-43.8)" fill="#d4d4d4"><path d="M-10.4 -0.35 L-7.4 -1.6 L3 -1.6 L3 1.6 L-7.4 1.6 L-10.4 0.35 Z" fill="#b4b4b4"/><rect x="2.7" y="-3.8" width="2.4" height="7.6"/><path d="M4.9 -2 H9.4 Q10.4 -2 10.4 -1 V1 Q10.4 2 9.4 2 H4.9 Z"/></g></svg>
<svg style="left:1412.0px;top:694.3px" width="11" height="12"><path d="M1.2 1.2 L9.8 6 L1.2 10.8 Z" fill="#8fce00" stroke="#0c0c0e" stroke-width="1" stroke-linejoin="round"/></svg>
<svg style="left:1412.0px;top:718.5px" width="11" height="12"><path d="M1.2 1.2 L9.8 6 L1.2 10.8 Z" fill="#2eb6f5" stroke="#0c0c0e" stroke-width="1" stroke-linejoin="round"/></svg>
<div class="a" style="left:1487.0px;top:694.9px;width:9px;height:9px;background:#8fce00;border:1px solid #0c0c0e"></div>
<div class="a" style="left:1487.0px;top:719.3px;width:9px;height:9px;background:#2eb6f5;border:1px solid #0c0c0e"></div>
<div class="t b" style="top:668.6px;font-size:11px;left:1457.8px;transform:translateX(-50%);text-shadow:0 0 2px #000,0 1px 2px #000,0 0 1px #000">第九级灰度</div>
<div class="a" style="left:1118.8px;top:405.5px;width:61px;height:54px;background:#2f3037;border-radius:4.5px;box-shadow:0 0 0 .6px #1c1c20,0 3px 8px rgba(0,0,0,.5)"></div>
<div class="a" style="left:1122.3px;top:408.1px;width:54px;height:26.8px;background:linear-gradient(90deg,rgb(0,0,0) 0.00%, rgb(0,0,0) 9.09%,rgb(23,23,23) 9.09%, rgb(23,23,23) 18.18%,rgb(46,46,46) 18.18%, rgb(46,46,46) 27.27%,rgb(69,69,69) 27.27%, rgb(69,69,69) 36.36%,rgb(92,92,92) 36.36%, rgb(92,92,92) 45.45%,rgb(116,116,116) 45.45%, rgb(116,116,116) 54.55%,rgb(139,139,139) 54.55%, rgb(139,139,139) 63.64%,rgb(162,162,162) 63.64%, rgb(162,162,162) 72.73%,rgb(185,185,185) 72.73%, rgb(185,185,185) 81.82%,rgb(208,208,208) 81.82%, rgb(208,208,208) 90.91%,rgb(232,232,232) 90.91%, rgb(232,232,232) 100.00%);border-radius:1px;box-shadow:0 0 0 1px #1a1a1e"></div>
<div class="a" style="left:1122.3px;top:437.5px;width:54px;height:2px;background:#84a7e2;border-radius:1px;box-shadow:0 0 0 .5px #1a1a1e"></div>
<div class="t b" style="top:445.1px;font-size:10.5px;left:1124.8px;color:#fff;">02</div>
<svg style="left:1107.0px;top:415.3px" width="11" height="12"><path d="M1.2 1.2 L9.8 6 L1.2 10.8 Z" fill="#8fce00" stroke="#0c0c0e" stroke-width="1" stroke-linejoin="round"/></svg>
<svg style="left:1107.0px;top:439.5px" width="11" height="12"><path d="M1.2 1.2 L9.8 6 L1.2 10.8 Z" fill="#2eb6f5" stroke="#0c0c0e" stroke-width="1" stroke-linejoin="round"/></svg>
<div class="a" style="left:1181.3px;top:415.9px;width:9px;height:9px;background:#8fce00;border:1px solid #0c0c0e"></div>
<div class="a" style="left:1181.3px;top:440.3px;width:9px;height:9px;background:#2eb6f5;border:1px solid #0c0c0e"></div>
<div class="a" style="left:1092px;top:414px;width:15px;height:25px;background:#3a3b41;border:1px solid #101013;border-radius:4px"></div>
<div class="dot" style="left:1095px;top:422px;width:9px;height:9px;background:#8fce00;border:.8px solid #10140a"></div>
<div class="a" style="left:1699.2px;top:373.3px;width:29px;height:98px;background:#2f3037;border-radius:4.5px;box-shadow:0 0 0 .6px #1c1c20,0 3px 8px rgba(0,0,0,.5)"></div>
<svg style="left:1687px;top:370.7px" width="11" height="12"><path d="M1.2 1.2 L9.8 6 L1.2 10.8 Z" fill="#8fce00" stroke="#0c0c0e" stroke-width="1" stroke-linejoin="round"/></svg>
<svg style="left:1687px;top:382.6px" width="11" height="12"><path d="M1.2 1.2 L9.8 6 L1.2 10.8 Z" fill="#8fce00" stroke="#0c0c0e" stroke-width="1" stroke-linejoin="round"/></svg>
<svg style="left:1687px;top:393.5px" width="11" height="12"><path d="M1.2 1.2 L9.8 6 L1.2 10.8 Z" fill="#8fce00" stroke="#0c0c0e" stroke-width="1" stroke-linejoin="round"/></svg>
<svg style="left:1687px;top:405.6px" width="11" height="12"><path d="M1.2 1.2 L9.8 6 L1.2 10.8 Z" fill="#8fce00" stroke="#0c0c0e" stroke-width="1" stroke-linejoin="round"/></svg>
<svg style="left:1687px;top:416.4px" width="11" height="12"><path d="M1.2 1.2 L9.8 6 L1.2 10.8 Z" fill="#8fce00" stroke="#0c0c0e" stroke-width="1" stroke-linejoin="round"/></svg>
<svg style="left:1687px;top:428.4px" width="11" height="12"><path d="M1.2 1.2 L9.8 6 L1.2 10.8 Z" fill="#8fce00" stroke="#0c0c0e" stroke-width="1" stroke-linejoin="round"/></svg>
<svg style="left:1687px;top:440.5px" width="11" height="12"><path d="M1.2 1.2 L9.8 6 L1.2 10.8 Z" fill="#8fce00" stroke="#0c0c0e" stroke-width="1" stroke-linejoin="round"/></svg>
<svg style="left:1687px;top:451.5px" width="11" height="12"><path d="M1.2 1.2 L9.8 6 L1.2 10.8 Z" fill="#8fce00" stroke="#0c0c0e" stroke-width="1" stroke-linejoin="round"/></svg>
<svg style="left:1687px;top:463.3px" width="11" height="12"><path d="M1.2 1.2 L9.8 6 L1.2 10.8 Z" fill="#8fce00" stroke="#0c0c0e" stroke-width="1" stroke-linejoin="round"/></svg>
<div class="a" style="left:1729.8px;top:418.0px;width:9px;height:9px;background:#8fce00;border:1px solid #0c0c0e"></div>
<svg style="left:1707.5px;top:414.5px" width="13" height="14" viewBox="0 0 13 14" fill="none"><path d="M1 4 L6.5 1.2 L12 4 L6.5 6.8 Z" stroke="#fff" stroke-width="1.1" stroke-linejoin="round"/><path d="M1 6.8 L6.5 9.6 L12 6.8" stroke="#ddd" stroke-width="1.1" stroke-linejoin="round"/><path d="M1 9.6 L6.5 12.4 L12 9.6" stroke="#888" stroke-width="1" stroke-linejoin="round"/></svg>
<div class="a" style="left:2133px;top:414px;width:15px;height:25px;background:#3a3b41;border:1px solid #101013;border-radius:4px"></div>
<div class="dot" style="left:2136px;top:422px;width:9px;height:9px;background:#8fce00;border:.8px solid #10140a"></div>
<div class="a" style="left:2159px;top:36px;width:387px;height:768px;background:#28282e;"></div>
<div class="t b" style="top:13.4px;font-size:13px;left:2322px;transform:translateX(-50%);">素材库</div>
<div class="a" style="left:2279px;top:32.5px;width:87px;height:2.5px;background:#e64b3d;"></div>
<div class="t b" style="top:13.4px;font-size:13px;left:2402.5px;transform:translateX(-50%);color:#4e4e54;">设置</div>
<div class="ln" style="left:2485px;top:6px;width:1px;height:29px;background:#0b0b0d"></div>
<div class="ln" style="left:2522px;top:6px;width:1px;height:29px;background:#0b0b0d"></div>
<svg style="left:2496px;top:12.5px" width="16" height="16" viewBox="0 0 16 16" fill="none" stroke="#8c8c8c" stroke-width="1.6"><circle cx="6.5" cy="6.5" r="4.8"/><path d="M10 10 L14.5 14.5" stroke-linecap="round"/></svg>
<div class="dot" style="left:2532px;top:18px;width:4px;height:4px;background:#858585"></div>
<div class="dot" style="left:2539px;top:18px;width:4px;height:4px;background:#858585"></div>
<div class="dot" style="left:2546px;top:18px;width:4px;height:4px;background:#858585"></div>
<div class="t b" style="top:52.6px;font-size:12.5px;left:2169px;">ResolveFX Revival</div>
<div class="a" style="left:2169px;top:77.5px;width:400px;height:274.5px;border:1px solid #0b0b0d;border-radius:4px;background:#28282e"></div>
<div class="a" style="left:2180.8px;top:99px;width:15.4px;height:12.6px;background:#8a8a8a;border-radius:1px;border-top:1.5px dotted #28282e;border-bottom:1.5px dotted #28282e"></div>
<div class="t b" style="left:2182.1px;top:102.7px;font-size:6.3px;color:#29292d;letter-spacing:-0.25px">GPU</div>
<div class="t " style="top:98.0px;font-size:12px;left:2207.5px;color:#929292;">去闪烁</div>
<div class="a" style="left:2180.8px;top:131px;width:15.4px;height:12.6px;background:#8a8a8a;border-radius:1px;border-top:1.5px dotted #28282e;border-bottom:1.5px dotted #28282e"></div>
<div class="t b" style="left:2182.1px;top:134.7px;font-size:6.3px;color:#29292d;letter-spacing:-0.25px">GPU</div>
<div class="t " style="top:130.0px;font-size:12px;left:2207.5px;color:#929292;">去除色带</div>
<div class="a" style="left:2180.8px;top:163px;width:15.4px;height:12.6px;background:#8a8a8a;border-radius:1px;border-top:1.5px dotted #28282e;border-bottom:1.5px dotted #28282e"></div>
<div class="t b" style="left:2182.1px;top:166.7px;font-size:6.3px;color:#29292d;letter-spacing:-0.25px">GPU</div>
<div class="t " style="top:162.0px;font-size:12px;left:2207.5px;color:#929292;">坏点修复</div>
<div class="a" style="left:2180.8px;top:195px;width:15.4px;height:12.6px;background:#8a8a8a;border-radius:1px;border-top:1.5px dotted #28282e;border-bottom:1.5px dotted #28282e"></div>
<div class="t b" style="left:2182.1px;top:198.7px;font-size:6.3px;color:#29292d;letter-spacing:-0.25px">GPU</div>
<div class="t " style="top:194.0px;font-size:12px;left:2207.5px;color:#929292;">局部替换工具</div>
<div class="a" style="left:2180.8px;top:227px;width:15.4px;height:12.6px;background:#8a8a8a;border-radius:1px;border-top:1.5px dotted #28282e;border-bottom:1.5px dotted #28282e"></div>
<div class="t b" style="left:2182.1px;top:230.7px;font-size:6.3px;color:#29292d;letter-spacing:-0.25px">GPU</div>
<div class="t " style="top:226.0px;font-size:12px;left:2207.5px;color:#929292;">物体移除</div>
<div class="a" style="left:2180.8px;top:259px;width:15.4px;height:12.6px;background:#8a8a8a;border-radius:1px;border-top:1.5px dotted #28282e;border-bottom:1.5px dotted #28282e"></div>
<div class="t b" style="left:2182.1px;top:262.7px;font-size:6.3px;color:#29292d;letter-spacing:-0.25px">GPU</div>
<div class="t " style="top:258.0px;font-size:12px;left:2207.5px;color:#929292;">自动除尘</div>
<div class="a" style="left:2180.8px;top:291px;width:15.4px;height:12.6px;background:#8a8a8a;border-radius:1px;border-top:1.5px dotted #28282e;border-bottom:1.5px dotted #28282e"></div>
<div class="t b" style="left:2182.1px;top:294.7px;font-size:6.3px;color:#29292d;letter-spacing:-0.25px">GPU</div>
<div class="t " style="top:290.0px;font-size:12px;left:2207.5px;color:#929292;">色度色差</div>
<div class="a" style="left:2180.8px;top:323px;width:15.4px;height:12.6px;background:#8a8a8a;border-radius:1px;border-top:1.5px dotted #28282e;border-bottom:1.5px dotted #28282e"></div>
<div class="t b" style="left:2182.1px;top:326.7px;font-size:6.3px;color:#29292d;letter-spacing:-0.25px">GPU</div>
<div class="t " style="top:322.0px;font-size:12px;left:2207.5px;color:#929292;">除尘</div>
<div class="t b" style="top:378.6px;font-size:12.5px;left:2169px;">ResolveFX优化</div>
<div class="a" style="left:2169px;top:404px;width:400px;height:114px;border:1px solid #0b0b0d;border-radius:4px;background:#28282e"></div>
<div class="a" style="left:2180.8px;top:426px;width:15.4px;height:12.6px;background:#8a8a8a;border-radius:1px;border-top:1.5px dotted #28282e;border-bottom:1.5px dotted #28282e"></div>
<div class="t b" style="left:2182.1px;top:429.7px;font-size:6.3px;color:#29292d;letter-spacing:-0.25px">GPU</div>
<div class="t " style="top:425.0px;font-size:12px;left:2207.5px;color:#929292;">Alpha蒙版收缩与扩展</div>
<div class="a" style="left:2180.8px;top:458px;width:15.4px;height:12.6px;background:#8a8a8a;border-radius:1px;border-top:1.5px dotted #28282e;border-bottom:1.5px dotted #28282e"></div>
<div class="t b" style="left:2182.1px;top:461.7px;font-size:6.3px;color:#29292d;letter-spacing:-0.25px">GPU</div>
<div class="t " style="top:457.0px;font-size:12px;left:2207.5px;color:#929292;">美化</div>
<div class="a" style="left:2180.8px;top:490px;width:15.4px;height:12.6px;background:#8a8a8a;border-radius:1px;border-top:1.5px dotted #28282e;border-bottom:1.5px dotted #28282e"></div>
<div class="t b" style="left:2182.1px;top:493.7px;font-size:6.3px;color:#29292d;letter-spacing:-0.25px">GPU</div>
<div class="t " style="top:489.0px;font-size:12px;left:2207.5px;color:#929292;">面部修饰</div>
<div class="t b" style="top:545.6px;font-size:12.5px;left:2169px;">ResolveFX光线</div>
<div class="a" style="left:2169px;top:571px;width:400px;height:178px;border:1px solid #0b0b0d;border-radius:4px;background:#28282e"></div>
<div class="a" style="left:2180.8px;top:593px;width:15.4px;height:12.6px;background:#8a8a8a;border-radius:1px;border-top:1.5px dotted #28282e;border-bottom:1.5px dotted #28282e"></div>
<div class="t b" style="left:2182.1px;top:596.7px;font-size:6.3px;color:#29292d;letter-spacing:-0.25px">GPU</div>
<div class="t " style="top:592.0px;font-size:12px;left:2207.5px;color:#929292;">光圈衍射</div>
<div class="a" style="left:2180.8px;top:625px;width:15.4px;height:12.6px;background:#8a8a8a;border-radius:1px;border-top:1.5px dotted #28282e;border-bottom:1.5px dotted #28282e"></div>
<div class="t b" style="left:2182.1px;top:628.7px;font-size:6.3px;color:#29292d;letter-spacing:-0.25px">GPU</div>
<div class="t " style="top:624.0px;font-size:12px;left:2207.5px;color:#929292;">发光</div>
<div class="a" style="left:2180.8px;top:657px;width:15.4px;height:12.6px;background:#8a8a8a;border-radius:1px;border-top:1.5px dotted #28282e;border-bottom:1.5px dotted #28282e"></div>
<div class="t b" style="left:2182.1px;top:660.7px;font-size:6.3px;color:#29292d;letter-spacing:-0.25px">GPU</div>
<div class="t " style="top:656.0px;font-size:12px;left:2207.5px;color:#929292;">射光</div>
<div class="a" style="left:2180.8px;top:689px;width:15.4px;height:12.6px;background:#8a8a8a;border-radius:1px;border-top:1.5px dotted #28282e;border-bottom:1.5px dotted #28282e"></div>
<div class="t b" style="left:2182.1px;top:692.7px;font-size:6.3px;color:#29292d;letter-spacing:-0.25px">GPU</div>
<div class="t " style="top:688.0px;font-size:12px;left:2207.5px;color:#929292;">镜头光斑</div>
<div class="a" style="left:2180.8px;top:721px;width:15.4px;height:12.6px;background:#8a8a8a;border-radius:1px;border-top:1.5px dotted #28282e;border-bottom:1.5px dotted #28282e"></div>
<div class="t b" style="left:2182.1px;top:724.7px;font-size:6.3px;color:#29292d;letter-spacing:-0.25px">GPU</div>
<div class="t " style="top:720.0px;font-size:12px;left:2207.5px;color:#929292;">镜头反射</div>
<div class="t b" style="top:776.6px;font-size:12.5px;left:2169px;">ResolveFX变形</div>
<div class="a" style="left:2169px;top:802px;width:400px;height:20px;border:1px solid #0b0b0d;border-radius:4px"></div>
<div class="a" style="left:0px;top:745px;width:1081px;height:59px;background:#222227;"></div>
<div class="a" style="left:25px;top:757px;width:1033px;height:2px;background:#4b4f59;"></div>
<svg style="left:46.9px;top:783.95px" width="9" height="5.5"><path d="M0 0 L4.5 5.5 L9 0" fill="none" stroke="#8c8c8c" stroke-width="1.3"/></svg>
<div class="a" style="left:21px;top:752px;width:5px;height:12px;background:#fff;border:1px solid #000;border-radius:1px"></div>
<div class="t b" style="top:779.5px;font-size:15.8px;left:1060.5px;transform:translateX(-100%);">01:01:03:15</div>
<svg style="left:19.3px;top:774.6px" width="24" height="24" viewBox="-12 -12 24 24" ><g transform="scale(1.0) rotate(-43.8)" fill="#fff"><path d="M-10.4 -0.35 L-7.4 -1.5 L3 -1.5 L3 1.5 L-7.4 1.5 L-10.4 0.35 Z" fill="#fff"/><rect x="2.7" y="-3.5" width="2.2" height="7"/><path d="M4.9 -1.8 H9.4 Q10.4 -1.8 10.4 -0.8 V0.8 Q10.4 1.8 9.4 1.8 H4.9 Z"/></g></svg>
<svg style="left:67.3px;top:776px" width="18" height="18" viewBox="-9 -9 18 18" ><g fill="none" stroke-linejoin="round"><path d="M-7.8 -2.1 L0 -6 L7.8 -2.1 L0 1.8 Z" stroke="#5c5c60" stroke-width="1.1"/><path d="M-7.8 0.9 L0 4.8 L7.8 0.9" stroke="#4a4a4e" stroke-width="1.1"/><path d="M-7.8 3.9 L0 7.8 L7.8 3.9" stroke="#38383c" stroke-width="1.1"/></g></svg>
<svg style="left:100.5px;top:780px" width="18" height="14" viewBox="0 0 18 14" ><g fill="none" stroke="#fff" stroke-width="1.5" stroke-linejoin="round"><path d="M1 4.6 H3.6 L8.8 0.9 V12.3 L3.6 8.6 H1 Z"/><path d="M11.4 4.6 Q12.9 6.6 11.4 8.6" stroke-linecap="round" stroke-width="1.3"/><path d="M13.9 2.6 Q17 6.6 13.9 10.6" stroke-linecap="round" stroke-width="1.3"/></g></svg>
<svg style="left:445.8px;top:779px" width="21" height="14" viewBox="0 0 21 14" ><g fill="#8a8a8a"><rect x="0" y="0" width="2.2" height="13.2"/><path d="M2.6 6.6 L11.4 0.2 V13 Z"/><path d="M11.6 6.6 L20.4 0.2 V13 Z"/></g></svg>
<svg style="left:484.9px;top:780px" width="11" height="14" viewBox="0 0 11 14" ><path d="M0 6.6 L10.3 0 V13.2 Z" fill="#8a8a8a"/></svg>
<svg style="left:517.9px;top:779.9px" width="14" height="14" viewBox="0 0 14 14" ><rect x="0" y="0" width="13.2" height="13.2" fill="#8a8a8a"/></svg>
<svg style="left:552.8px;top:780px" width="11" height="14" viewBox="0 0 11 14" ><path d="M10.3 6.6 L0 0 V13.2 Z" fill="#8a8a8a"/></svg>
<svg style="left:581.8px;top:780px" width="21" height="14" viewBox="0 0 21 14" ><g fill="#8a8a8a"><rect x="18" y="0" width="2.2" height="13.2"/><path d="M17.6 6.6 L8.8 0.2 V13 Z"/><path d="M8.8 6.6 L0 0.2 V13 Z"/></g></svg>
<svg style="left:617.5px;top:778.2px" width="18" height="17" viewBox="0 0 18 17" ><g fill="none" stroke="#8a8a8a" stroke-width="1.5" stroke-linecap="round" stroke-linejoin="round"><path d="M1 7.6 V6.4 Q1 4 3.4 4 H15.6"/><path d="M13 1 L16 4 L13 7"/><path d="M16.4 8.8 V10 Q16.4 12.4 14 12.4 H1.8"/><path d="M4.4 9.4 L1.4 12.4 L4.4 15.4"/></g></svg>
<div class="ln" style="left:0px;top:804px;width:2546px;height:1px;background:#0b0b0d"></div>
<div class="a" style="left:0px;top:805px;width:2546px;height:63px;background:#28282e;"></div>
<div class="a" style="left:31px;top:805px;width:2515px;height:14px;background:linear-gradient(#1f1f24,#28282e);"></div>
<div class="ln" style="left:30px;top:805px;width:1px;height:63px;background:#1a1a1e"></div>
<div class="t " style="top:845.6px;font-size:10.5px;left:6px;color:#dcdcdc;">V1</div>
<div class="ln" style="left:31px;top:805px;width:1px;height:17px;background:#5e5e64"></div>
<div class="t " style="top:810.9px;font-size:11px;left:37px;color:#a8a8a8;">01:00:00:00</div>
<div class="ln" style="left:231px;top:805px;width:1px;height:17px;background:#5e5e64"></div>
<div class="t " style="top:810.9px;font-size:11px;left:237px;color:#a8a8a8;">01:00:10:13</div>
<div class="ln" style="left:431px;top:805px;width:1px;height:17px;background:#5e5e64"></div>
<div class="t " style="top:810.9px;font-size:11px;left:437px;color:#a8a8a8;">01:00:21:02</div>
<div class="ln" style="left:631px;top:805px;width:1px;height:17px;background:#5e5e64"></div>
<div class="t " style="top:810.9px;font-size:11px;left:637px;color:#a8a8a8;">01:00:31:15</div>
<div class="ln" style="left:831px;top:805px;width:1px;height:17px;background:#5e5e64"></div>
<div class="t " style="top:810.9px;font-size:11px;left:837px;color:#a8a8a8;">01:00:42:04</div>
<div class="ln" style="left:1031px;top:805px;width:1px;height:17px;background:#5e5e64"></div>
<div class="t " style="top:810.9px;font-size:11px;left:1037px;color:#a8a8a8;">01:00:52:17</div>
<div class="ln" style="left:1231px;top:805px;width:1px;height:17px;background:#5e5e64"></div>
<div class="t " style="top:810.9px;font-size:11px;left:1237px;color:#a8a8a8;">01:01:03:06</div>
<div class="ln" style="left:1431px;top:805px;width:1px;height:17px;background:#5e5e64"></div>
<div class="t " style="top:810.9px;font-size:11px;left:1437px;color:#a8a8a8;">01:01:13:19</div>
<div class="ln" style="left:1631px;top:805px;width:1px;height:17px;background:#5e5e64"></div>
<div class="t " style="top:810.9px;font-size:11px;left:1637px;color:#a8a8a8;">01:01:24:08</div>
<div class="ln" style="left:1831px;top:805px;width:1px;height:17px;background:#5e5e64"></div>
<div class="t " style="top:810.9px;font-size:11px;left:1837px;color:#a8a8a8;">01:01:34:21</div>
<div class="ln" style="left:2031px;top:805px;width:1px;height:17px;background:#5e5e64"></div>
<div class="t " style="top:810.9px;font-size:11px;left:2037px;color:#a8a8a8;">01:01:45:10</div>
<div class="ln" style="left:2231px;top:805px;width:1px;height:17px;background:#5e5e64"></div>
<div class="t " style="top:810.9px;font-size:11px;left:2237px;color:#a8a8a8;">01:01:55:23</div>
<div class="ln" style="left:2431px;top:805px;width:1px;height:17px;background:#5e5e64"></div>
<div class="t " style="top:810.9px;font-size:11px;left:2437px;color:#a8a8a8;">01:02:06:12</div>
<div class="a" style="left:1243px;top:847px;width:95px;height:8px;background:#7aabd9;border:1px solid #e0483c;box-shadow:inset 0 0 0 .8px #15151a"></div>
<div class="a" style="left:2459px;top:849px;width:90px;height:4px;background:#78aad8;"></div>
<div class="ln" style="left:1241.5px;top:818px;width:1.5px;height:39px;background:#e64b3d"></div>
<svg style="left:1234.5px;top:806px" width="16" height="13" viewBox="0 0 16 13"><path d="M1.5 0.5 H14.5 Q15.5 0.5 15.5 1.5 V6 L8 12.5 L0.5 6 V1.5 Q0.5 0.5 1.5 0.5 Z" fill="#e64b3d"/></svg>
<div class="ln" style="left:0px;top:868px;width:2546px;height:1px;background:#0b0b0d"></div>
<div class="a" style="left:0px;top:869px;width:2546px;height:50px;background:#28282e;"></div>
<div class="ln" style="left:58px;top:879px;width:1px;height:30px;background:#404046"></div>
<div class="ln" style="left:118px;top:879px;width:1px;height:30px;background:#404046"></div>
<div class="ln" style="left:178px;top:879px;width:1px;height:30px;background:#404046"></div>
<div class="ln" style="left:238px;top:879px;width:1px;height:30px;background:#404046"></div>
<div class="ln" style="left:1218px;top:879px;width:1px;height:30px;background:#404046"></div>
<div class="ln" style="left:1278px;top:879px;width:1px;height:30px;background:#404046"></div>
<div class="ln" style="left:1338px;top:879px;width:1px;height:30px;background:#404046"></div>
<div class="ln" style="left:1398px;top:879px;width:1px;height:30px;background:#404046"></div>
<div class="ln" style="left:1458px;top:879px;width:1px;height:30px;background:#404046"></div>
<div class="ln" style="left:2438px;top:879px;width:1px;height:30px;background:#404046"></div>
<div class="ln" style="left:2498px;top:879px;width:2px;height:30px;background:#404046"></div>
<div class="ln" style="left:0px;top:919px;width:2546px;height:1px;background:#0b0b0d"></div>
<svg style="left:14.4px;top:883.4px" width="28" height="21" viewBox="0 0 28 21" ><g fill="none" stroke="#606064" stroke-width="1.2" stroke-linejoin="round"><path d="M5.6 5.2 L8.4 1 L19 3.6 L19 14 L13.4 13"/><path d="M5.6 5.2 L15.2 7.6 L19 3.6"/><path d="M15.2 8 L25.2 4.6 Q26.8 4.4 26.8 6 V14 Q26.8 15.2 25.6 15.6 L16.6 18.6 Q15.2 18.8 15.2 17.4 Z" stroke-width="1.3"/><ellipse cx="20.6" cy="11.6" rx="2.7" ry="3.6" /></g><circle cx="6.4" cy="14.4" r="4.8" fill="none" stroke="#606064" stroke-width="2.2" stroke-dasharray="3 2"/></svg>
<svg style="left:78px;top:886px" width="21" height="17" viewBox="0 0 21 17" ><g fill="none" stroke="#7a7a7a" stroke-width="1.2"><path d="M0.6 4 V0.6 H4 M17 0.6 H20.4 V4 M20.4 13 V16.4 H17 M4 16.4 H0.6 V13"/></g><rect x="3.4" y="3.4" width="2.9" height="2.9" fill="#8a8a8a"/><rect x="7.199999999999999" y="3.4" width="2.9" height="2.9" fill="#6a6a6a"/><rect x="11.0" y="3.4" width="2.9" height="2.9" fill="#8a8a8a"/><rect x="14.799999999999999" y="3.4" width="2.9" height="2.9" fill="#7a7a7a"/><rect x="3.4" y="7.199999999999999" width="2.9" height="2.9" fill="#6a6a6a"/><rect x="7.199999999999999" y="7.199999999999999" width="2.9" height="2.9" fill="#8a8a8a"/><rect x="11.0" y="7.199999999999999" width="2.9" height="2.9" fill="#707070"/><rect x="14.799999999999999" y="7.199999999999999" width="2.9" height="2.9" fill="#8a8a8a"/><rect x="3.4" y="11.0" width="2.9" height="2.9" fill="#8a8a8a"/><rect x="7.199999999999999" y="11.0" width="2.9" height="2.9" fill="#7a7a7a"/><rect x="11.0" y="11.0" width="2.9" height="2.9" fill="#8a8a8a"/><rect x="14.799999999999999" y="11.0" width="2.9" height="2.9" fill="#606060"/></svg>
<svg style="left:137.3px;top:883.6px" width="20" height="20" viewBox="-10 -10 20 20" ><circle cx="0" cy="0" r="8.8" fill="#36363a" stroke="#fff" stroke-width="1.5"/><path d="M-7 0 H7 M0 -7 V7" stroke="#6a6a6e" stroke-width="1"/><circle cx="0" cy="0" r="2.5" fill="#fff"/></svg>
<svg style="left:200px;top:885.5px" width="20" height="18" viewBox="0 0 20 18" ><circle cx="10" cy="4.4" r="3.9" fill="#777"/><circle cx="4.8" cy="12.7" r="3.2" fill="none" stroke="#777" stroke-width="1.7"/><circle cx="15.1" cy="12.7" r="3.9" fill="#4c4c50"/><path d="M4.2 1.4 Q0.6 1.6 1.2 6" fill="none" stroke="#777" stroke-width="1.2"/><path d="M-0.8 4.2 L1.3 6.6 L3.2 4.2" fill="none" stroke="#777" stroke-width="1.2"/></svg>
<svg style="left:254.4px;top:886.7px" width="27" height="16" viewBox="0 0 27 16" ><rect x="5.6" y="0.6" width="20.6" height="14" fill="none" stroke="#66666a" stroke-width="1.2" rx="0.8"/><path d="M0 3.8 H9.5 M1 6.8 H10.5 M1.8 9.8 H7 M3.4 12.6 H5.6" stroke="#66666a" stroke-width="1"/><circle cx="12.6" cy="4.6" r="1.6" fill="#777"/><path d="M9.6 12.6 L13.6 7.2 L17.6 12.6 Z" fill="#707070"/><path d="M14.6 12.6 L19.8 6.2 L24.6 12.6 Z" fill="#58585c"/></svg>
<svg style="left:1178px;top:886px" width="21" height="17" viewBox="0 0 21 17" ><g stroke="#808080" stroke-width="1" fill="none"><rect x="0.5" y="0.5" width="19.6" height="15"/><path d="M5.4 0.5 V15.5 M10.3 0.5 V15.5 M15.2 0.5 V15.5 M0.5 5.5 H20.1 M0.5 10.5 H20.1"/></g><path d="M-0.6 16.6 C9 16 11 0 21 -0.6" fill="none" stroke="#fff" stroke-width="2" stroke-linecap="round"/></svg>
<svg style="left:1236.4px;top:882.2px" width="24" height="24" viewBox="-12 -12 24 24" ><g transform="scale(1.12) rotate(-43.8)" fill="#7c7c7c"><path d="M-10.4 -0.35 L-7.4 -1.5 L3 -1.5 L3 1.5 L-7.4 1.5 L-10.4 0.35 Z" fill="#646468"/><rect x="2.7" y="-3.5" width="2.2" height="7"/><path d="M4.9 -1.8 H9.4 Q10.4 -1.8 10.4 -0.8 V0.8 Q10.4 1.8 9.4 1.8 H4.9 Z"/></g></svg>
<div class="dot" style="left:1259.8px;top:878.9px;width:3.4px;height:3.4px;background:#e64b3d"></div>
<svg style="left:1295.8px;top:884.2px" width="24" height="20" viewBox="-12 -10 24 20" ><ellipse cx="0" cy="0" rx="9.6" ry="7.4" fill="#343438" stroke="#808080" stroke-width="1.1"/><circle cx="0" cy="-7.4" r="1.5" fill="#28282e" stroke="#8a8a8a" stroke-width="0.9"/><circle cx="0" cy="7.4" r="1.5" fill="#28282e" stroke="#8a8a8a" stroke-width="0.9"/><circle cx="-9.6" cy="0" r="1.5" fill="#28282e" stroke="#8a8a8a" stroke-width="0.9"/><circle cx="9.6" cy="0" r="1.5" fill="#28282e" stroke="#8a8a8a" stroke-width="0.9"/></svg>
<svg style="left:1356.6px;top:884.2px" width="24" height="20" viewBox="-12 -10 24 20" ><g fill="none" stroke="#7e7e7e" stroke-width="1.2"><circle cx="0" cy="0" r="5.4"/><path d="M0 -8.4 V-3 M0 3 V8.4 M-8.4 0 H-3 M3 0 H8.4"/><path d="M-11 -5 V-8 H-7.4 M7.4 -8 H11 V-5 M11 5 V8 H7.4 M-7.4 8 H-11 V5" stroke="#66666a" stroke-width="1"/></g><circle cx="0" cy="0" r="0.9" fill="#7e7e7e"/></svg>
<svg style="left:1417.6px;top:885px" width="21" height="19" viewBox="0 0 21 19" ><path d="M4.6 0.4 Q9 6.4 9 8.8 Q9 12.8 4.6 12.8 Q0.3 12.8 0.3 8.8 Q0.3 6.4 4.6 0.4 Z" fill="#808080"/><rect x="2.9" y="7.2" width="2.8" height="2.8" fill="#606064" transform="rotate(45 4.3 8.6)"/><path d="M7.6 18.4 L14 6.2 L20.4 18.4 Z" fill="#808080"/><path d="M14 9.6 L14 17 L17.8 17 Z" fill="#5a5a5e"/></svg>
<svg style="left:1475px;top:885px" width="26" height="20" viewBox="0 0 26 20" ><defs><pattern id="ck" width="2.6" height="2.6" patternUnits="userSpaceOnUse"><rect width="1.3" height="1.3" fill="#55555a"/><rect x="1.3" y="1.3" width="1.3" height="1.3" fill="#55555a"/></pattern></defs><rect x="0" y="0" width="22" height="14" fill="url(#ck)"/><rect x="5.4" y="4.6" width="20" height="14" fill="#28282e" stroke="#66666a" stroke-width="1.1"/><rect x="6.6" y="5.8" width="17.6" height="11.6" fill="url(#ck)" opacity=".6"/><circle cx="15.2" cy="9.2" r="2.4" fill="#7a7a7a"/><path d="M10 16.8 Q10 12.4 15.2 12.4 Q20.4 12.4 20.4 16.8 Z" fill="#7a7a7a"/></svg>
<svg style="left:2396.8px;top:884.8px" width="25" height="19" viewBox="0 0 25 19" ><rect x="2" y="2" width="18.4" height="14.4" fill="#4b4b50"/><path d="M1.2 13 V1.2 H15" fill="none" stroke="#fff" stroke-width="1.5" stroke-dasharray="1.5 1.3"/><path d="M21.2 9.4 V17.2 H8" fill="none" stroke="#fff" stroke-width="1.5" stroke-dasharray="1.5 1.3"/><path d="M15.6 1.2 H18 Q21 1.2 21 4.2 V7" fill="none" stroke="#fff" stroke-width="1.5"/><path d="M18.4 5 L21 8 L23.6 5" fill="none" stroke="#fff" stroke-width="1.5"/><path d="M6.8 17.2 H4.4 Q1.4 17.2 1.4 14.2 V11.4" fill="none" stroke="#fff" stroke-width="1.5"/><path d="M-1.2 13.4 L1.4 10.4 L4 13.4" fill="none" stroke="#fff" stroke-width="1.5"/></svg>
<svg style="left:2457px;top:886px" width="23" height="18" viewBox="0 0 23 18" ><g fill="none" stroke="#55555a"><rect x="0.5" y="0.5" width="19" height="14" rx="1.2" stroke="#48484d"/><rect x="2.5" y="3" width="19" height="14" rx="1.2" stroke="#48484d"/><rect x="2.2" y="2.4" width="17.6" height="12.2" rx="0.8" stroke="#66666b" stroke-width="1.2" fill="#28282e"/></g><text x="11" y="12.2" font-family="Liberation Sans, sans-serif" font-size="9.6" fill="#6a6a6f" text-anchor="middle">3D</text></svg>
<svg style="left:2519px;top:884px" width="20" height="20" viewBox="-10 -10 20 20" ><circle cx="0" cy="0" r="8.4" fill="none" stroke="#78787c" stroke-width="1.3"/><circle cx="0" cy="-3.9" r="1.1" fill="#8a8a8a"/><rect x="-0.9" y="-1.4" width="1.8" height="6.4" fill="#8a8a8a"/></svg>
<div class="a" style="left:0px;top:920px;width:2546px;height:29px;background:#212126;"></div>
<div class="ln" style="left:0px;top:949px;width:2546px;height:1px;background:#0b0b0d"></div>
<div class="t b" style="top:928.4px;font-size:13px;left:9px;">色轮</div>
<div class="dot" style="left:380.3px;top:931.3px;width:6.4px;height:6.4px;background:#fff"></div>
<div class="dot" style="left:399.3px;top:931.3px;width:6.4px;height:6.4px;background:#313136"></div>
<div class="dot" style="left:418.3px;top:931.3px;width:6.4px;height:6.4px;background:#313136"></div>
<div class="t b" style="top:928.4px;font-size:13px;left:790.5px;transform:translateX(-100%);">一级校色轮</div>
<svg style="left:797.4px;top:932.3000000000001px" width="8.2" height="4.8"><path d="M0 0 L4.1 4.8 L8.2 0" fill="none" stroke="#8c8c8c" stroke-width="1.3"/></svg>
<div class="ln" style="left:814px;top:920px;width:1px;height:29px;background:#0b0b0d"></div>
<div class="ln" style="left:851px;top:920px;width:1px;height:415px;background:#0b0b0d"></div>
<div class="t b" style="top:928.4px;font-size:13px;left:860px;">曲线</div>
<div class="dot" style="left:1223.3px;top:931.3px;width:6.4px;height:6.4px;background:#313136"></div>
<div class="dot" style="left:1242.3px;top:931.3px;width:6.4px;height:6.4px;background:#313136"></div>
<div class="dot" style="left:1261.3px;top:931.3px;width:6.4px;height:6.4px;background:#313136"></div>
<div class="dot" style="left:1280.3px;top:931.3px;width:6.4px;height:6.4px;background:#313136"></div>
<div class="dot" style="left:1299.3px;top:931.3px;width:6.4px;height:6.4px;background:#fff"></div>
<div class="dot" style="left:1318.3px;top:931.3px;width:6.4px;height:6.4px;background:#313136"></div>
<div class="t b" style="top:928.4px;font-size:13px;left:1606.5px;transform:translateX(-100%);">亮度 vs 饱和度</div>
<svg style="left:1613.9px;top:932.3000000000001px" width="8.2" height="4.8"><path d="M0 0 L4.1 4.8 L8.2 0" fill="none" stroke="#8c8c8c" stroke-width="1.3"/></svg>
<div class="ln" style="left:1631px;top:920px;width:1px;height:29px;background:#0b0b0d"></div>
<div class="ln" style="left:1668px;top:920px;width:1px;height:29px;background:#0b0b0d"></div>
<div class="dot" style="left:1677.5px;top:932.5px;width:4px;height:4px;background:#858585"></div>
<div class="dot" style="left:1684.5px;top:932.5px;width:4px;height:4px;background:#858585"></div>
<div class="dot" style="left:1691.5px;top:932.5px;width:4px;height:4px;background:#858585"></div>
<div class="ln" style="left:1705px;top:920px;width:1px;height:415px;background:#0b0b0d"></div>
<div class="t b" style="top:928.4px;font-size:13px;left:1716px;">调整大小</div>
<div class="dot" style="left:2050.3px;top:931.3px;width:6.4px;height:6.4px;background:#313136"></div>
<div class="dot" style="left:2069.3px;top:931.3px;width:6.4px;height:6.4px;background:#fff"></div>
<div class="dot" style="left:2088.3px;top:931.3px;width:6.4px;height:6.4px;background:#313136"></div>
<div class="dot" style="left:2107.3px;top:931.3px;width:6.4px;height:6.4px;background:#313136"></div>
<div class="dot" style="left:2126.3px;top:931.3px;width:6.4px;height:6.4px;background:#313136"></div>
<div class="t b" style="top:928.4px;font-size:13px;left:2460.5px;transform:translateX(-100%);">调整输入大小</div>
<svg style="left:2467.4px;top:932.3000000000001px" width="8.2" height="4.8"><path d="M0 0 L4.1 4.8 L8.2 0" fill="none" stroke="#8c8c8c" stroke-width="1.3"/></svg>
<div class="ln" style="left:2484px;top:920px;width:1px;height:29px;background:#0b0b0d"></div>
<div class="ln" style="left:2521px;top:920px;width:1px;height:29px;background:#0b0b0d"></div>
<div class="dot" style="left:2532px;top:932.5px;width:4px;height:4px;background:#858585"></div>
<div class="dot" style="left:2539px;top:932.5px;width:4px;height:4px;background:#858585"></div>
<div class="dot" style="left:2546px;top:932.5px;width:4px;height:4px;background:#858585"></div>
<svg style="left:824px;top:925.5px" width="18" height="18" viewBox="-9 -9 18 18" fill="none" stroke="#858585" stroke-width="1.15"><path d="M-6.11 -1.52 A6.3 6.3 0 1 1 -6.06 1.74"/><path d="M-6.31 -5.72 L-6.31 -1.22 L-1.81 -1.22" stroke-linejoin="miter"/><path d="M-2.6 0.3 H2.6 M0 -2.3 V2.9" stroke-width="1.1"/></svg>
<svg style="left:1641px;top:925.5px" width="18" height="18" viewBox="-9 -9 18 18" fill="none" stroke="#858585" stroke-width="1.15"><path d="M-6.11 -1.52 A6.3 6.3 0 1 1 -6.06 1.74"/><path d="M-6.31 -5.72 L-6.31 -1.22 L-1.81 -1.22" stroke-linejoin="miter"/><path d="M-2.6 0.3 H2.6 M0 -2.3 V2.9" stroke-width="1.1"/></svg>
<svg style="left:2494px;top:925.5px" width="18" height="18" viewBox="-9 -9 18 18" fill="none" stroke="#858585" stroke-width="1.15"><path d="M-6.11 -1.52 A6.3 6.3 0 1 1 -6.06 1.74"/><path d="M-6.31 -5.72 L-6.31 -1.22 L-1.81 -1.22" stroke-linejoin="miter"/><path d="M-2.6 0.3 H2.6 M0 -2.3 V2.9" stroke-width="1.1"/></svg>
<div class="a" style="left:0px;top:950px;width:851px;height:339px;background:#28282e;"></div>
<div class="t b" style="top:963.9px;font-size:12px;left:103.3px;transform:translateX(-50%);color:#f0f0f0;">暗部</div>
<svg style="left:176.8px;top:960.0px" width="18" height="18" viewBox="-9 -9 18 18" fill="none" stroke="#858585" stroke-width="1.15"><path d="M-6.11 -1.52 A6.3 6.3 0 1 1 -6.06 1.74"/><path d="M-6.31 -5.72 L-6.31 -1.22 L-1.81 -1.22" stroke-linejoin="miter"/></svg>
<div class="dot" style="left:6.799999999999997px;top:1001.8px;width:188px;height:188px;border:3px solid #212124"></div>
<div class="a" style="left:99.8px;top:1001.8px;width:2px;height:2px;background:#6a6a6a"></div>
<div class="dot" style="left:18.89999999999999px;top:1013.9px;width:163.8px;height:163.8px;background:#1a1a1c"></div>
<div class="dot" style="left:19.89999999999999px;top:1014.9px;width:161.8px;height:161.8px;background:conic-gradient(from 30deg,#ee22ee,#2a14ee,#1ef0f0,#14ee14,#f0f01e,#ee1a1a,#ee22ee)"></div>
<div class="dot" style="left:27.700000000000003px;top:1022.6999999999999px;width:146.2px;height:146.2px;background:#1a1a1c"></div>
<div class="dot" style="left:28.700000000000003px;top:1023.6999999999999px;width:144.2px;height:144.2px;background:#28282e"></div>
<div class="a" style="left:30.799999999999997px;top:1095.3px;width:140px;height:1px;background:#48484c;"></div>
<div class="a" style="left:100.3px;top:1025.8px;width:1px;height:140px;background:#48484c;"></div>
<div class="dot" style="left:94.6px;top:1089.6px;width:12.4px;height:12.4px;border:2px solid #909090;background:#28282e"></div>
<div class="a" style="left:27.799999999999997px;top:1216px;width:147px;height:14px;background:#1b1b1e;"></div>
<div class="a" style="left:33.0px;top:1219px;width:1.7px;height:8px;background:rgb(34,34,34);border-radius:.8px"></div>
<div class="a" style="left:36.9px;top:1219px;width:1.7px;height:8px;background:rgb(34,34,34);border-radius:.8px"></div>
<div class="a" style="left:40.7px;top:1219px;width:1.7px;height:8px;background:rgb(41,41,41);border-radius:.8px"></div>
<div class="a" style="left:44.6px;top:1219px;width:1.7px;height:8px;background:rgb(48,48,48);border-radius:.8px"></div>
<div class="a" style="left:48.4px;top:1219px;width:1.7px;height:8px;background:rgb(56,56,56);border-radius:.8px"></div>
<div class="a" style="left:52.3px;top:1219px;width:1.7px;height:8px;background:rgb(64,64,64);border-radius:.8px"></div>
<div class="a" style="left:56.1px;top:1219px;width:1.7px;height:8px;background:rgb(73,73,73);border-radius:.8px"></div>
<div class="a" style="left:60.0px;top:1219px;width:1.7px;height:8px;background:rgb(82,82,82);border-radius:.8px"></div>
<div class="a" style="left:63.9px;top:1219px;width:1.7px;height:8px;background:rgb(91,91,91);border-radius:.8px"></div>
<div class="a" style="left:67.7px;top:1219px;width:1.7px;height:8px;background:rgb(100,100,100);border-radius:.8px"></div>
<div class="a" style="left:71.6px;top:1219px;width:1.7px;height:8px;background:rgb(110,110,110);border-radius:.8px"></div>
<div class="a" style="left:75.4px;top:1219px;width:1.7px;height:8px;background:rgb(120,120,120);border-radius:.8px"></div>
<div class="a" style="left:79.3px;top:1219px;width:1.7px;height:8px;background:rgb(129,129,129);border-radius:.8px"></div>
<div class="a" style="left:83.1px;top:1219px;width:1.7px;height:8px;background:rgb(139,139,139);border-radius:.8px"></div>
<div class="a" style="left:87.0px;top:1219px;width:1.7px;height:8px;background:rgb(149,149,149);border-radius:.8px"></div>
<div class="a" style="left:90.9px;top:1219px;width:1.7px;height:8px;background:rgb(160,160,160);border-radius:.8px"></div>
<div class="a" style="left:94.7px;top:1219px;width:1.7px;height:8px;background:rgb(170,170,170);border-radius:.8px"></div>
<div class="a" style="left:98.6px;top:1219px;width:1.7px;height:8px;background:rgb(180,180,180);border-radius:.8px"></div>
<div class="a" style="left:102.4px;top:1219px;width:1.7px;height:8px;background:rgb(180,180,180);border-radius:.8px"></div>
<div class="a" style="left:106.3px;top:1219px;width:1.7px;height:8px;background:rgb(170,170,170);border-radius:.8px"></div>
<div class="a" style="left:110.1px;top:1219px;width:1.7px;height:8px;background:rgb(160,160,160);border-radius:.8px"></div>
<div class="a" style="left:114.0px;top:1219px;width:1.7px;height:8px;background:rgb(149,149,149);border-radius:.8px"></div>
<div class="a" style="left:117.9px;top:1219px;width:1.7px;height:8px;background:rgb(139,139,139);border-radius:.8px"></div>
<div class="a" style="left:121.7px;top:1219px;width:1.7px;height:8px;background:rgb(129,129,129);border-radius:.8px"></div>
<div class="a" style="left:125.6px;top:1219px;width:1.7px;height:8px;background:rgb(120,120,120);border-radius:.8px"></div>
<div class="a" style="left:129.4px;top:1219px;width:1.7px;height:8px;background:rgb(110,110,110);border-radius:.8px"></div>
<div class="a" style="left:133.3px;top:1219px;width:1.7px;height:8px;background:rgb(100,100,100);border-radius:.8px"></div>
<div class="a" style="left:137.1px;top:1219px;width:1.7px;height:8px;background:rgb(91,91,91);border-radius:.8px"></div>
<div class="a" style="left:141.0px;top:1219px;width:1.7px;height:8px;background:rgb(82,82,82);border-radius:.8px"></div>
<div class="a" style="left:144.9px;top:1219px;width:1.7px;height:8px;background:rgb(73,73,73);border-radius:.8px"></div>
<div class="a" style="left:148.7px;top:1219px;width:1.7px;height:8px;background:rgb(64,64,64);border-radius:.8px"></div>
<div class="a" style="left:152.6px;top:1219px;width:1.7px;height:8px;background:rgb(56,56,56);border-radius:.8px"></div>
<div class="a" style="left:156.4px;top:1219px;width:1.7px;height:8px;background:rgb(48,48,48);border-radius:.8px"></div>
<div class="a" style="left:160.3px;top:1219px;width:1.7px;height:8px;background:rgb(41,41,41);border-radius:.8px"></div>
<div class="a" style="left:164.1px;top:1219px;width:1.7px;height:8px;background:rgb(34,34,34);border-radius:.8px"></div>
<div class="a" style="left:168.0px;top:1219px;width:1.7px;height:8px;background:rgb(34,34,34);border-radius:.8px"></div>
<div class="num" style="left:19.799999999999997px;top:1239px;width:38px;height:24px;line-height:24px">0.00</div>
<div class="t " style="top:1265.4px;font-size:12px;left:38.8px;transform:translateX(-50%);color:#8e8e8e;">Y</div>
<div class="num" style="left:61.8px;top:1239px;width:38px;height:24px;line-height:24px">0.00</div>
<div class="t " style="top:1265.4px;font-size:12px;left:80.8px;transform:translateX(-50%);color:#8e8e8e;">R</div>
<div class="num" style="left:103.8px;top:1239px;width:38px;height:24px;line-height:24px">0.00</div>
<div class="t " style="top:1265.4px;font-size:12px;left:122.8px;transform:translateX(-50%);color:#8e8e8e;">G</div>
<div class="num" style="left:145.8px;top:1239px;width:38px;height:24px;line-height:24px">0.00</div>
<div class="t " style="top:1265.4px;font-size:12px;left:164.8px;transform:translateX(-50%);color:#8e8e8e;">B</div>
<div class="t b" style="top:962.9px;font-size:12px;left:317.3px;transform:translateX(-50%);color:#f0f0f0;">中灰</div>
<svg style="left:392.7px;top:959.0px" width="18" height="18" viewBox="-9 -9 18 18" fill="none" stroke="#858585" stroke-width="1.15"><path d="M-6.11 -1.52 A6.3 6.3 0 1 1 -6.06 1.74"/><path d="M-6.31 -5.72 L-6.31 -1.22 L-1.81 -1.22" stroke-linejoin="miter"/></svg>
<div class="dot" style="left:222.7px;top:1001.0px;width:188px;height:188px;border:3px solid #212124"></div>
<div class="a" style="left:315.7px;top:1001.0px;width:2px;height:2px;background:#6a6a6a"></div>
<div class="dot" style="left:234.79999999999998px;top:1013.1px;width:163.8px;height:163.8px;background:#1a1a1c"></div>
<div class="dot" style="left:235.79999999999998px;top:1014.1px;width:161.8px;height:161.8px;background:conic-gradient(from 30deg,#ee22ee,#2a14ee,#1ef0f0,#14ee14,#f0f01e,#ee1a1a,#ee22ee)"></div>
<div class="dot" style="left:243.6px;top:1021.9px;width:146.2px;height:146.2px;background:#1a1a1c"></div>
<div class="dot" style="left:244.6px;top:1022.9px;width:144.2px;height:144.2px;background:#28282e"></div>
<div class="a" style="left:246.7px;top:1094.5px;width:140px;height:1px;background:#48484c;"></div>
<div class="a" style="left:316.2px;top:1025.0px;width:1px;height:140px;background:#48484c;"></div>
<div class="dot" style="left:310.5px;top:1088.8px;width:12.4px;height:12.4px;border:2px solid #909090;background:#28282e"></div>
<div class="a" style="left:243.7px;top:1216px;width:147px;height:14px;background:#1b1b1e;"></div>
<div class="a" style="left:248.9px;top:1219px;width:1.7px;height:8px;background:rgb(34,34,34);border-radius:.8px"></div>
<div class="a" style="left:252.8px;top:1219px;width:1.7px;height:8px;background:rgb(34,34,34);border-radius:.8px"></div>
<div class="a" style="left:256.6px;top:1219px;width:1.7px;height:8px;background:rgb(41,41,41);border-radius:.8px"></div>
<div class="a" style="left:260.5px;top:1219px;width:1.7px;height:8px;background:rgb(48,48,48);border-radius:.8px"></div>
<div class="a" style="left:264.3px;top:1219px;width:1.7px;height:8px;background:rgb(56,56,56);border-radius:.8px"></div>
<div class="a" style="left:268.2px;top:1219px;width:1.7px;height:8px;background:rgb(64,64,64);border-radius:.8px"></div>
<div class="a" style="left:272.0px;top:1219px;width:1.7px;height:8px;background:rgb(73,73,73);border-radius:.8px"></div>
<div class="a" style="left:275.9px;top:1219px;width:1.7px;height:8px;background:rgb(82,82,82);border-radius:.8px"></div>
<div class="a" style="left:279.8px;top:1219px;width:1.7px;height:8px;background:rgb(91,91,91);border-radius:.8px"></div>
<div class="a" style="left:283.6px;top:1219px;width:1.7px;height:8px;background:rgb(100,100,100);border-radius:.8px"></div>
<div class="a" style="left:287.5px;top:1219px;width:1.7px;height:8px;background:rgb(110,110,110);border-radius:.8px"></div>
<div class="a" style="left:291.3px;top:1219px;width:1.7px;height:8px;background:rgb(120,120,120);border-radius:.8px"></div>
<div class="a" style="left:295.2px;top:1219px;width:1.7px;height:8px;background:rgb(129,129,129);border-radius:.8px"></div>
<div class="a" style="left:299.0px;top:1219px;width:1.7px;height:8px;background:rgb(139,139,139);border-radius:.8px"></div>
<div class="a" style="left:302.9px;top:1219px;width:1.7px;height:8px;background:rgb(149,149,149);border-radius:.8px"></div>
<div class="a" style="left:306.8px;top:1219px;width:1.7px;height:8px;background:rgb(160,160,160);border-radius:.8px"></div>
<div class="a" style="left:310.6px;top:1219px;width:1.7px;height:8px;background:rgb(170,170,170);border-radius:.8px"></div>
<div class="a" style="left:314.5px;top:1219px;width:1.7px;height:8px;background:rgb(180,180,180);border-radius:.8px"></div>
<div class="a" style="left:318.3px;top:1219px;width:1.7px;height:8px;background:rgb(180,180,180);border-radius:.8px"></div>
<div class="a" style="left:322.2px;top:1219px;width:1.7px;height:8px;background:rgb(170,170,170);border-radius:.8px"></div>
<div class="a" style="left:326.0px;top:1219px;width:1.7px;height:8px;background:rgb(160,160,160);border-radius:.8px"></div>
<div class="a" style="left:329.9px;top:1219px;width:1.7px;height:8px;background:rgb(149,149,149);border-radius:.8px"></div>
<div class="a" style="left:333.8px;top:1219px;width:1.7px;height:8px;background:rgb(139,139,139);border-radius:.8px"></div>
<div class="a" style="left:337.6px;top:1219px;width:1.7px;height:8px;background:rgb(129,129,129);border-radius:.8px"></div>
<div class="a" style="left:341.5px;top:1219px;width:1.7px;height:8px;background:rgb(120,120,120);border-radius:.8px"></div>
<div class="a" style="left:345.3px;top:1219px;width:1.7px;height:8px;background:rgb(110,110,110);border-radius:.8px"></div>
<div class="a" style="left:349.2px;top:1219px;width:1.7px;height:8px;background:rgb(100,100,100);border-radius:.8px"></div>
<div class="a" style="left:353.0px;top:1219px;width:1.7px;height:8px;background:rgb(91,91,91);border-radius:.8px"></div>
<div class="a" style="left:356.9px;top:1219px;width:1.7px;height:8px;background:rgb(82,82,82);border-radius:.8px"></div>
<div class="a" style="left:360.8px;top:1219px;width:1.7px;height:8px;background:rgb(73,73,73);border-radius:.8px"></div>
<div class="a" style="left:364.6px;top:1219px;width:1.7px;height:8px;background:rgb(64,64,64);border-radius:.8px"></div>
<div class="a" style="left:368.5px;top:1219px;width:1.7px;height:8px;background:rgb(56,56,56);border-radius:.8px"></div>
<div class="a" style="left:372.3px;top:1219px;width:1.7px;height:8px;background:rgb(48,48,48);border-radius:.8px"></div>
<div class="a" style="left:376.2px;top:1219px;width:1.7px;height:8px;background:rgb(41,41,41);border-radius:.8px"></div>
<div class="a" style="left:380.0px;top:1219px;width:1.7px;height:8px;background:rgb(34,34,34);border-radius:.8px"></div>
<div class="a" style="left:383.9px;top:1219px;width:1.7px;height:8px;background:rgb(34,34,34);border-radius:.8px"></div>
<div class="num" style="left:235.7px;top:1239px;width:38px;height:24px;line-height:24px">0.00</div>
<div class="t " style="top:1265.4px;font-size:12px;left:254.7px;transform:translateX(-50%);color:#8e8e8e;">Y</div>
<div class="num" style="left:277.7px;top:1239px;width:38px;height:24px;line-height:24px">0.00</div>
<div class="t " style="top:1265.4px;font-size:12px;left:296.7px;transform:translateX(-50%);color:#8e8e8e;">R</div>
<div class="num" style="left:319.7px;top:1239px;width:38px;height:24px;line-height:24px">0.00</div>
<div class="t " style="top:1265.4px;font-size:12px;left:338.7px;transform:translateX(-50%);color:#8e8e8e;">G</div>
<div class="num" style="left:361.7px;top:1239px;width:38px;height:24px;line-height:24px">0.00</div>
<div class="t " style="top:1265.4px;font-size:12px;left:380.7px;transform:translateX(-50%);color:#8e8e8e;">B</div>
<div class="t b" style="top:963.9px;font-size:12px;left:534.2px;transform:translateX(-50%);color:#f0f0f0;">亮部</div>
<svg style="left:607.7px;top:960.0px" width="18" height="18" viewBox="-9 -9 18 18" fill="none" stroke="#858585" stroke-width="1.15"><path d="M-6.11 -1.52 A6.3 6.3 0 1 1 -6.06 1.74"/><path d="M-6.31 -5.72 L-6.31 -1.22 L-1.81 -1.22" stroke-linejoin="miter"/></svg>
<div class="dot" style="left:437.70000000000005px;top:1001.8px;width:188px;height:188px;border:3px solid #212124"></div>
<svg style="left:436.70000000000005px;top:1000.8px" width="190" height="190" viewBox="-95 -95 190 190" fill="none"><path d="M0 -92.6 A92.6 92.6 0 0 0 0 92.6" stroke="#9a9a9a" stroke-width="1.2"/></svg>
<div class="dot" style="left:449.80000000000007px;top:1013.9px;width:163.8px;height:163.8px;background:#1a1a1c"></div>
<div class="dot" style="left:450.80000000000007px;top:1014.9px;width:161.8px;height:161.8px;background:conic-gradient(from 30deg,#ee22ee,#2a14ee,#1ef0f0,#14ee14,#f0f01e,#ee1a1a,#ee22ee)"></div>
<div class="dot" style="left:458.6px;top:1022.6999999999999px;width:146.2px;height:146.2px;background:#1a1a1c"></div>
<div class="dot" style="left:459.6px;top:1023.6999999999999px;width:144.2px;height:144.2px;background:#28282e"></div>
<div class="a" style="left:461.70000000000005px;top:1095.3px;width:140px;height:1px;background:#48484c;"></div>
<div class="a" style="left:531.2px;top:1025.8px;width:1px;height:140px;background:#48484c;"></div>
<div class="dot" style="left:525.5px;top:1089.6px;width:12.4px;height:12.4px;border:2px solid #909090;background:#28282e"></div>
<div class="a" style="left:458.70000000000005px;top:1216px;width:147px;height:14px;background:#1b1b1e;"></div>
<div class="a" style="left:463.9px;top:1219px;width:1.7px;height:8px;background:rgb(34,34,34);border-radius:.8px"></div>
<div class="a" style="left:467.8px;top:1219px;width:1.7px;height:8px;background:rgb(34,34,34);border-radius:.8px"></div>
<div class="a" style="left:471.6px;top:1219px;width:1.7px;height:8px;background:rgb(41,41,41);border-radius:.8px"></div>
<div class="a" style="left:475.5px;top:1219px;width:1.7px;height:8px;background:rgb(48,48,48);border-radius:.8px"></div>
<div class="a" style="left:479.3px;top:1219px;width:1.7px;height:8px;background:rgb(56,56,56);border-radius:.8px"></div>
<div class="a" style="left:483.2px;top:1219px;width:1.7px;height:8px;background:rgb(64,64,64);border-radius:.8px"></div>
<div class="a" style="left:487.0px;top:1219px;width:1.7px;height:8px;background:rgb(73,73,73);border-radius:.8px"></div>
<div class="a" style="left:490.9px;top:1219px;width:1.7px;height:8px;background:rgb(82,82,82);border-radius:.8px"></div>
<div class="a" style="left:494.8px;top:1219px;width:1.7px;height:8px;background:rgb(91,91,91);border-radius:.8px"></div>
<div class="a" style="left:498.6px;top:1219px;width:1.7px;height:8px;background:rgb(100,100,100);border-radius:.8px"></div>
<div class="a" style="left:502.5px;top:1219px;width:1.7px;height:8px;background:rgb(110,110,110);border-radius:.8px"></div>
<div class="a" style="left:506.3px;top:1219px;width:1.7px;height:8px;background:rgb(120,120,120);border-radius:.8px"></div>
<div class="a" style="left:510.2px;top:1219px;width:1.7px;height:8px;background:rgb(129,129,129);border-radius:.8px"></div>
<div class="a" style="left:514.0px;top:1219px;width:1.7px;height:8px;background:rgb(139,139,139);border-radius:.8px"></div>
<div class="a" style="left:517.9px;top:1219px;width:1.7px;height:8px;background:rgb(149,149,149);border-radius:.8px"></div>
<div class="a" style="left:521.8px;top:1219px;width:1.7px;height:8px;background:rgb(160,160,160);border-radius:.8px"></div>
<div class="a" style="left:525.6px;top:1219px;width:1.7px;height:8px;background:rgb(170,170,170);border-radius:.8px"></div>
<div class="a" style="left:529.5px;top:1219px;width:1.7px;height:8px;background:rgb(180,180,180);border-radius:.8px"></div>
<div class="a" style="left:533.3px;top:1219px;width:1.7px;height:8px;background:rgb(180,180,180);border-radius:.8px"></div>
<div class="a" style="left:537.2px;top:1219px;width:1.7px;height:8px;background:rgb(170,170,170);border-radius:.8px"></div>
<div class="a" style="left:541.0px;top:1219px;width:1.7px;height:8px;background:rgb(160,160,160);border-radius:.8px"></div>
<div class="a" style="left:544.9px;top:1219px;width:1.7px;height:8px;background:rgb(149,149,149);border-radius:.8px"></div>
<div class="a" style="left:548.8px;top:1219px;width:1.7px;height:8px;background:rgb(139,139,139);border-radius:.8px"></div>
<div class="a" style="left:552.6px;top:1219px;width:1.7px;height:8px;background:rgb(129,129,129);border-radius:.8px"></div>
<div class="a" style="left:556.5px;top:1219px;width:1.7px;height:8px;background:rgb(120,120,120);border-radius:.8px"></div>
<div class="a" style="left:560.3px;top:1219px;width:1.7px;height:8px;background:rgb(110,110,110);border-radius:.8px"></div>
<div class="a" style="left:564.2px;top:1219px;width:1.7px;height:8px;background:rgb(100,100,100);border-radius:.8px"></div>
<div class="a" style="left:568.0px;top:1219px;width:1.7px;height:8px;background:rgb(91,91,91);border-radius:.8px"></div>
<div class="a" style="left:571.9px;top:1219px;width:1.7px;height:8px;background:rgb(82,82,82);border-radius:.8px"></div>
<div class="a" style="left:575.8px;top:1219px;width:1.7px;height:8px;background:rgb(73,73,73);border-radius:.8px"></div>
<div class="a" style="left:579.6px;top:1219px;width:1.7px;height:8px;background:rgb(64,64,64);border-radius:.8px"></div>
<div class="a" style="left:583.5px;top:1219px;width:1.7px;height:8px;background:rgb(56,56,56);border-radius:.8px"></div>
<div class="a" style="left:587.3px;top:1219px;width:1.7px;height:8px;background:rgb(48,48,48);border-radius:.8px"></div>
<div class="a" style="left:591.2px;top:1219px;width:1.7px;height:8px;background:rgb(41,41,41);border-radius:.8px"></div>
<div class="a" style="left:595.0px;top:1219px;width:1.7px;height:8px;background:rgb(34,34,34);border-radius:.8px"></div>
<div class="a" style="left:598.9px;top:1219px;width:1.7px;height:8px;background:rgb(34,34,34);border-radius:.8px"></div>
<div class="num" style="left:450.70000000000005px;top:1239px;width:38px;height:24px;line-height:24px">1.00</div>
<div class="t " style="top:1265.4px;font-size:12px;left:469.70000000000005px;transform:translateX(-50%);color:#8e8e8e;">Y</div>
<div class="num" style="left:492.70000000000005px;top:1239px;width:38px;height:24px;line-height:24px">1.00</div>
<div class="t " style="top:1265.4px;font-size:12px;left:511.70000000000005px;transform:translateX(-50%);color:#8e8e8e;">R</div>
<div class="num" style="left:534.7px;top:1239px;width:38px;height:24px;line-height:24px">1.00</div>
<div class="t " style="top:1265.4px;font-size:12px;left:553.7px;transform:translateX(-50%);color:#8e8e8e;">G</div>
<div class="num" style="left:576.7px;top:1239px;width:38px;height:24px;line-height:24px">1.00</div>
<div class="t " style="top:1265.4px;font-size:12px;left:595.7px;transform:translateX(-50%);color:#8e8e8e;">B</div>
<div class="t b" style="top:962.9px;font-size:12px;left:748.3px;transform:translateX(-50%);color:#f0f0f0;">偏移</div>
<svg style="left:824px;top:959.0px" width="18" height="18" viewBox="-9 -9 18 18" fill="none" stroke="#858585" stroke-width="1.15"><path d="M-6.11 -1.52 A6.3 6.3 0 1 1 -6.06 1.74"/><path d="M-6.31 -5.72 L-6.31 -1.22 L-1.81 -1.22" stroke-linejoin="miter"/></svg>
<div class="dot" style="left:654px;top:1001.0px;width:188px;height:188px;border:3px solid #212124"></div>
<div class="a" style="left:747px;top:1001.0px;width:2px;height:2px;background:#6a6a6a"></div>
<div class="dot" style="left:666.1px;top:1013.1px;width:163.8px;height:163.8px;background:#1a1a1c"></div>
<div class="dot" style="left:667.1px;top:1014.1px;width:161.8px;height:161.8px;background:conic-gradient(from 30deg,#ee22ee,#2a14ee,#1ef0f0,#14ee14,#f0f01e,#ee1a1a,#ee22ee)"></div>
<div class="dot" style="left:674.9px;top:1021.9px;width:146.2px;height:146.2px;background:#1a1a1c"></div>
<div class="dot" style="left:675.9px;top:1022.9px;width:144.2px;height:144.2px;background:#28282e"></div>
<div class="a" style="left:678px;top:1094.5px;width:140px;height:1px;background:#48484c;"></div>
<div class="a" style="left:747.5px;top:1025.0px;width:1px;height:140px;background:#48484c;"></div>
<div class="dot" style="left:741.8px;top:1088.8px;width:12.4px;height:12.4px;border:2px solid #909090;background:#28282e"></div>
<div class="a" style="left:675px;top:1216px;width:147px;height:14px;background:#1b1b1e;"></div>
<div class="a" style="left:680.2px;top:1219px;width:1.7px;height:8px;background:rgb(34,34,34);border-radius:.8px"></div>
<div class="a" style="left:684.1px;top:1219px;width:1.7px;height:8px;background:rgb(34,34,34);border-radius:.8px"></div>
<div class="a" style="left:687.9px;top:1219px;width:1.7px;height:8px;background:rgb(41,41,41);border-radius:.8px"></div>
<div class="a" style="left:691.8px;top:1219px;width:1.7px;height:8px;background:rgb(48,48,48);border-radius:.8px"></div>
<div class="a" style="left:695.6px;top:1219px;width:1.7px;height:8px;background:rgb(56,56,56);border-radius:.8px"></div>
<div class="a" style="left:699.5px;top:1219px;width:1.7px;height:8px;background:rgb(64,64,64);border-radius:.8px"></div>
<div class="a" style="left:703.3px;top:1219px;width:1.7px;height:8px;background:rgb(73,73,73);border-radius:.8px"></div>
<div class="a" style="left:707.2px;top:1219px;width:1.7px;height:8px;background:rgb(82,82,82);border-radius:.8px"></div>
<div class="a" style="left:711.1px;top:1219px;width:1.7px;height:8px;background:rgb(91,91,91);border-radius:.8px"></div>
<div class="a" style="left:714.9px;top:1219px;width:1.7px;height:8px;background:rgb(100,100,100);border-radius:.8px"></div>
<div class="a" style="left:718.8px;top:1219px;width:1.7px;height:8px;background:rgb(110,110,110);border-radius:.8px"></div>
<div class="a" style="left:722.6px;top:1219px;width:1.7px;height:8px;background:rgb(120,120,120);border-radius:.8px"></div>
<div class="a" style="left:726.5px;top:1219px;width:1.7px;height:8px;background:rgb(129,129,129);border-radius:.8px"></div>
<div class="a" style="left:730.3px;top:1219px;width:1.7px;height:8px;background:rgb(139,139,139);border-radius:.8px"></div>
<div class="a" style="left:734.2px;top:1219px;width:1.7px;height:8px;background:rgb(149,149,149);border-radius:.8px"></div>
<div class="a" style="left:738.1px;top:1219px;width:1.7px;height:8px;background:rgb(160,160,160);border-radius:.8px"></div>
<div class="a" style="left:741.9px;top:1219px;width:1.7px;height:8px;background:rgb(170,170,170);border-radius:.8px"></div>
<div class="a" style="left:745.8px;top:1219px;width:1.7px;height:8px;background:rgb(180,180,180);border-radius:.8px"></div>
<div class="a" style="left:749.6px;top:1219px;width:1.7px;height:8px;background:rgb(180,180,180);border-radius:.8px"></div>
<div class="a" style="left:753.5px;top:1219px;width:1.7px;height:8px;background:rgb(170,170,170);border-radius:.8px"></div>
<div class="a" style="left:757.3px;top:1219px;width:1.7px;height:8px;background:rgb(160,160,160);border-radius:.8px"></div>
<div class="a" style="left:761.2px;top:1219px;width:1.7px;height:8px;background:rgb(149,149,149);border-radius:.8px"></div>
<div class="a" style="left:765.1px;top:1219px;width:1.7px;height:8px;background:rgb(139,139,139);border-radius:.8px"></div>
<div class="a" style="left:768.9px;top:1219px;width:1.7px;height:8px;background:rgb(129,129,129);border-radius:.8px"></div>
<div class="a" style="left:772.8px;top:1219px;width:1.7px;height:8px;background:rgb(120,120,120);border-radius:.8px"></div>
<div class="a" style="left:776.6px;top:1219px;width:1.7px;height:8px;background:rgb(110,110,110);border-radius:.8px"></div>
<div class="a" style="left:780.5px;top:1219px;width:1.7px;height:8px;background:rgb(100,100,100);border-radius:.8px"></div>
<div class="a" style="left:784.3px;top:1219px;width:1.7px;height:8px;background:rgb(91,91,91);border-radius:.8px"></div>
<div class="a" style="left:788.2px;top:1219px;width:1.7px;height:8px;background:rgb(82,82,82);border-radius:.8px"></div>
<div class="a" style="left:792.1px;top:1219px;width:1.7px;height:8px;background:rgb(73,73,73);border-radius:.8px"></div>
<div class="a" style="left:795.9px;top:1219px;width:1.7px;height:8px;background:rgb(64,64,64);border-radius:.8px"></div>
<div class="a" style="left:799.8px;top:1219px;width:1.7px;height:8px;background:rgb(56,56,56);border-radius:.8px"></div>
<div class="a" style="left:803.6px;top:1219px;width:1.7px;height:8px;background:rgb(48,48,48);border-radius:.8px"></div>
<div class="a" style="left:807.5px;top:1219px;width:1.7px;height:8px;background:rgb(41,41,41);border-radius:.8px"></div>
<div class="a" style="left:811.3px;top:1219px;width:1.7px;height:8px;background:rgb(34,34,34);border-radius:.8px"></div>
<div class="a" style="left:815.2px;top:1219px;width:1.7px;height:8px;background:rgb(34,34,34);border-radius:.8px"></div>
<div class="num" style="left:676px;top:1239px;width:46px;height:24px;line-height:24px">25.00</div>
<div class="t " style="top:1265.4px;font-size:12px;left:699px;transform:translateX(-50%);color:#8e8e8e;">R</div>
<div class="num" style="left:726px;top:1239px;width:46px;height:24px;line-height:24px">25.00</div>
<div class="t " style="top:1265.4px;font-size:12px;left:749px;transform:translateX(-50%);color:#8e8e8e;">G</div>
<div class="num" style="left:776px;top:1239px;width:46px;height:24px;line-height:24px">25.00</div>
<div class="t " style="top:1265.4px;font-size:12px;left:799px;transform:translateX(-50%);color:#8e8e8e;">B</div>
<svg style="left:8.399999999999999px;top:959.4px" width="24" height="24" viewBox="-10 -10 24 24"><path d="M-7.6 0 H7.6 M0 -7.6 V7.6" stroke="#0a0a0c" stroke-width="3" stroke-linecap="round"/><path d="M-7.4 0 H7.4 M0 -7.4 V7.4" stroke="#fff" stroke-width="1.25" stroke-linecap="round"/><circle cx="7.1" cy="6.3" r="3.2" fill="#000" stroke="#141416" stroke-width="0"/></svg>
<svg style="left:439.2px;top:959.4px" width="24" height="24" viewBox="-10 -10 24 24"><path d="M-7.6 0 H7.6 M0 -7.6 V7.6" stroke="#0a0a0c" stroke-width="3" stroke-linecap="round"/><path d="M-7.4 0 H7.4 M0 -7.4 V7.4" stroke="#fff" stroke-width="1.25" stroke-linecap="round"/><circle cx="7.1" cy="6.3" r="2.8" fill="#fff" stroke="#141416" stroke-width="0.8"/></svg>
<div class="ln" style="left:0px;top:1289px;width:851px;height:1px;background:#0b0b0d"></div>
<div class="a" style="left:0px;top:1290px;width:851px;height:45px;background:#2e2e34;"></div>
<div class="t " style="top:1308.4px;font-size:12px;left:392px;transform:translateX(-100%);color:#929292;">对比度</div>
<div class="num numw" style="left:397px;top:1304px;width:43px;height:21px;line-height:21.5px;font-size:12.5px">1.000</div>
<div class="t " style="top:1308.4px;font-size:12px;left:478px;transform:translateX(-100%);color:#929292;">轴心</div>
<div class="num numw" style="left:483px;top:1304px;width:43px;height:21px;line-height:21.5px;font-size:12.5px">0.435</div>
<div class="t " style="top:1308.4px;font-size:12px;left:576px;transform:translateX(-100%);color:#929292;">饱和度</div>
<div class="num numw" style="left:581px;top:1304px;width:43px;height:21px;line-height:21.5px;font-size:12.5px">50.00</div>
<div class="t " style="top:1308.4px;font-size:12px;left:662px;transform:translateX(-100%);color:#929292;">色相</div>
<div class="num numw" style="left:667px;top:1304px;width:43px;height:21px;line-height:21.5px;font-size:12.5px">50.00</div>
<div class="t " style="top:1308.4px;font-size:12px;left:773px;transform:translateX(-100%);color:#929292;">亮度混合</div>
<div class="num numw" style="left:778px;top:1304px;width:43px;height:21px;line-height:21.5px;font-size:12.5px">100.00</div>
<div class="a" style="left:45px;top:1306px;width:15.8px;height:15.8px;background:#868686;border-radius:3.5px"></div>
<div class="t " style="top:1308.5px;font-size:12.5px;left:53px;transform:translateX(-50%);color:#2e2e34;">A</div>
<div class="a" style="left:76px;top:1303.5px;width:58px;height:21px;border:1px solid #44444a;border-radius:11px;overflow:hidden;background:#2e2e34"><div class="a" style="left:0;top:0;width:28px;height:21px;background:#17171a;border-right:1px solid #44444a"></div></div>
<div class="t " style="top:1308.4px;font-size:13px;left:91.5px;transform:translateX(-50%);color:#e64b3d;">1</div>
<div class="t " style="top:1308.4px;font-size:13px;left:118px;transform:translateX(-50%);color:#c8c8c8;">2</div>
<div class="a" style="left:852px;top:950px;width:853px;height:239px;background:#28282e;"></div>
<div class="a" style="left:871px;top:969px;width:814px;height:310px;background:#141416"></div>
<div class="a" style="left:872px;top:970px;width:812px;height:308px;background:linear-gradient(90deg,#000 0%,#d9d9d9 100%);"></div>
<svg style="left:872px;top:970px;overflow:hidden" width="812" height="308" stroke-width="1"><g shape-rendering="crispEdges"><line x1="16.92" y1="0" x2="16.92" y2="308" stroke="rgba(255,255,255,0.105)"/><line x1="33.83" y1="0" x2="33.83" y2="308" stroke="rgba(255,255,255,0.105)"/><line x1="50.75" y1="0" x2="50.75" y2="308" stroke="rgba(255,255,255,0.105)"/><line x1="67.67" y1="0" x2="67.67" y2="308" stroke="rgba(255,255,255,0.105)"/><line x1="84.58" y1="0" x2="84.58" y2="308" stroke="rgba(255,255,255,0.105)"/><line x1="101.50" y1="0" x2="101.50" y2="308" stroke="rgba(255,255,255,0.105)"/><line x1="118.42" y1="0" x2="118.42" y2="308" stroke="rgba(255,255,255,0.105)"/><line x1="135.33" y1="0" x2="135.33" y2="308" stroke="rgba(255,255,255,0.24)"/><line x1="152.25" y1="0" x2="152.25" y2="308" stroke="rgba(255,255,255,0.105)"/><line x1="169.17" y1="0" x2="169.17" y2="308" stroke="rgba(255,255,255,0.105)"/><line x1="186.08" y1="0" x2="186.08" y2="308" stroke="rgba(255,255,255,0.105)"/><line x1="203.00" y1="0" x2="203.00" y2="308" stroke="rgba(255,255,255,0.105)"/><line x1="219.92" y1="0" x2="219.92" y2="308" stroke="rgba(255,255,255,0.105)"/><line x1="236.83" y1="0" x2="236.83" y2="308" stroke="rgba(255,255,255,0.105)"/><line x1="253.75" y1="0" x2="253.75" y2="308" stroke="rgba(255,255,255,0.105)"/><line x1="270.67" y1="0" x2="270.67" y2="308" stroke="rgba(255,255,255,0.24)"/><line x1="287.58" y1="0" x2="287.58" y2="308" stroke="rgba(255,255,255,0.105)"/><line x1="304.50" y1="0" x2="304.50" y2="308" stroke="rgba(255,255,255,0.105)"/><line x1="321.42" y1="0" x2="321.42" y2="308" stroke="rgba(255,255,255,0.105)"/><line x1="338.33" y1="0" x2="338.33" y2="308" stroke="rgba(255,255,255,0.105)"/><line x1="355.25" y1="0" x2="355.25" y2="308" stroke="rgba(255,255,255,0.105)"/><line x1="372.17" y1="0" x2="372.17" y2="308" stroke="rgba(255,255,255,0.105)"/><line x1="389.08" y1="0" x2="389.08" y2="308" stroke="rgba(255,255,255,0.105)"/><line x1="406.00" y1="0" x2="406.00" y2="308" stroke="rgba(255,255,255,0.24)"/><line x1="422.92" y1="0" x2="422.92" y2="308" stroke="rgba(255,255,255,0.105)"/><line x1="439.83" y1="0" x2="439.83" y2="308" stroke="rgba(255,255,255,0.105)"/><line x1="456.75" y1="0" x2="456.75" y2="308" stroke="rgba(255,255,255,0.105)"/><line x1="473.67" y1="0" x2="473.67" y2="308" stroke="rgba(255,255,255,0.105)"/><line x1="490.58" y1="0" x2="490.58" y2="308" stroke="rgba(255,255,255,0.105)"/><line x1="507.50" y1="0" x2="507.50" y2="308" stroke="rgba(255,255,255,0.105)"/><line x1="524.42" y1="0" x2="524.42" y2="308" stroke="rgba(255,255,255,0.105)"/><line x1="541.33" y1="0" x2="541.33" y2="308" stroke="rgba(255,255,255,0.24)"/><line x1="558.25" y1="0" x2="558.25" y2="308" stroke="rgba(255,255,255,0.105)"/><line x1="575.17" y1="0" x2="575.17" y2="308" stroke="rgba(255,255,255,0.105)"/><line x1="592.08" y1="0" x2="592.08" y2="308" stroke="rgba(255,255,255,0.105)"/><line x1="609.00" y1="0" x2="609.00" y2="308" stroke="rgba(255,255,255,0.105)"/><line x1="625.92" y1="0" x2="625.92" y2="308" stroke="rgba(255,255,255,0.105)"/><line x1="642.83" y1="0" x2="642.83" y2="308" stroke="rgba(255,255,255,0.105)"/><line x1="659.75" y1="0" x2="659.75" y2="308" stroke="rgba(255,255,255,0.105)"/><line x1="676.67" y1="0" x2="676.67" y2="308" stroke="rgba(255,255,255,0.24)"/><line x1="693.58" y1="0" x2="693.58" y2="308" stroke="rgba(255,255,255,0.105)"/><line x1="710.50" y1="0" x2="710.50" y2="308" stroke="rgba(255,255,255,0.105)"/><line x1="727.42" y1="0" x2="727.42" y2="308" stroke="rgba(255,255,255,0.105)"/><line x1="744.33" y1="0" x2="744.33" y2="308" stroke="rgba(255,255,255,0.105)"/><line x1="761.25" y1="0" x2="761.25" y2="308" stroke="rgba(255,255,255,0.105)"/><line x1="778.17" y1="0" x2="778.17" y2="308" stroke="rgba(255,255,255,0.105)"/><line x1="795.08" y1="0" x2="795.08" y2="308" stroke="rgba(255,255,255,0.105)"/><line x1="0" y1="19.25" x2="812" y2="19.25" stroke="rgba(255,255,255,0.105)"/><line x1="0" y1="38.50" x2="812" y2="38.50" stroke="rgba(255,255,255,0.105)"/><line x1="0" y1="57.75" x2="812" y2="57.75" stroke="rgba(255,255,255,0.105)"/><line x1="0" y1="77.00" x2="812" y2="77.00" stroke="rgba(255,255,255,0.105)"/><line x1="0" y1="96.25" x2="812" y2="96.25" stroke="rgba(255,255,255,0.105)"/><line x1="0" y1="115.50" x2="812" y2="115.50" stroke="rgba(255,255,255,0.105)"/><line x1="0" y1="134.75" x2="812" y2="134.75" stroke="rgba(255,255,255,0.105)"/><line x1="0" y1="154.00" x2="812" y2="154.00" stroke="rgba(255,255,255,0.105)"/><line x1="0" y1="173.25" x2="812" y2="173.25" stroke="rgba(255,255,255,0.105)"/><line x1="0" y1="192.50" x2="812" y2="192.50" stroke="rgba(255,255,255,0.105)"/><line x1="0" y1="211.75" x2="812" y2="211.75" stroke="rgba(255,255,255,0.105)"/><line x1="0" y1="231.00" x2="812" y2="231.00" stroke="rgba(255,255,255,0.105)"/><line x1="0" y1="250.25" x2="812" y2="250.25" stroke="rgba(255,255,255,0.105)"/><line x1="0" y1="269.50" x2="812" y2="269.50" stroke="rgba(255,255,255,0.105)"/><line x1="0" y1="288.75" x2="812" y2="288.75" stroke="rgba(255,255,255,0.105)"/></g><path d="M-1.3 308 L1.3 0 L1.9 0 L4.3 308 Z" fill="rgba(255,255,255,0.13)"/><path d="M1.5 0 V308" stroke="rgba(255,255,255,0.5)" stroke-width="1"/><path d="M79.6 308 L82.2 0 L82.8 0 L85.2 308 Z" fill="rgba(255,255,255,0.13)"/><path d="M82.4 0 V308" stroke="rgba(255,255,255,0.5)" stroke-width="1"/><path d="M159.2 308 L161.8 0 L162.4 0 L164.8 308 Z" fill="rgba(255,255,255,0.13)"/><path d="M162.0 0 V308" stroke="rgba(255,255,255,0.5)" stroke-width="1"/><path d="M241.6 308 L244.2 0 L244.8 0 L247.2 308 Z" fill="rgba(255,255,255,0.13)"/><path d="M244.4 0 V308" stroke="rgba(255,255,255,0.5)" stroke-width="1"/><path d="M321.2 308 L323.8 0 L324.4 0 L326.8 308 Z" fill="rgba(255,255,255,0.13)"/><path d="M324.0 0 V308" stroke="rgba(255,255,255,0.5)" stroke-width="1"/><path d="M403.5 308 L406.1 0 L406.7 0 L409.1 308 Z" fill="rgba(255,255,255,0.13)"/><path d="M406.3 0 V308" stroke="rgba(255,255,255,0.5)" stroke-width="1"/><path d="M483.2 308 L485.8 0 L486.4 0 L488.8 308 Z" fill="rgba(255,255,255,0.13)"/><path d="M486.0 0 V308" stroke="rgba(255,255,255,0.5)" stroke-width="1"/><path d="M565.6 308 L568.2 0 L568.8 0 L571.2 308 Z" fill="rgba(255,255,255,0.13)"/><path d="M568.4 0 V308" stroke="rgba(255,255,255,0.5)" stroke-width="1"/><path d="M645.2 308 L647.8 0 L648.4 0 L650.8 308 Z" fill="rgba(255,255,255,0.13)"/><path d="M648.0 0 V308" stroke="rgba(255,255,255,0.5)" stroke-width="1"/><path d="M727.6 308 L730.2 0 L730.8 0 L733.2 308 Z" fill="rgba(255,255,255,0.13)"/><path d="M730.4 0 V308" stroke="rgba(255,255,255,0.5)" stroke-width="1"/><line x1="0" y1="154.0" x2="812" y2="154.0" stroke="#f0f0f0" stroke-width="1" shape-rendering="crispEdges"/></svg>
<div class="dot" style="left:869.5px;top:1120.0px;width:8px;height:8px;background:#e0e0e0"></div>
<div class="dot" style="left:1680px;top:1120.0px;width:8px;height:8px;background:#d4d4d4;border:1px solid #222"></div>
<div class="a" style="left:866px;top:950px;width:6px;height:340px;background:#28282e;"></div>
<div class="a" style="left:1685px;top:950px;width:20px;height:340px;background:#28282e;"></div>
<div class="ln" style="left:852px;top:1289px;width:853px;height:1px;background:#0b0b0d"></div>
<div class="a" style="left:852px;top:1290px;width:853px;height:45px;background:#2e2e34;"></div>
<div class="dot" style="left:907.0px;top:1309.0px;width:11.0px;height:11.0px;background:#000"></div>
<div class="dot" style="left:906px;top:1308px;width:13px;height:13px;border:1px solid #3a3a40"></div>
<div class="dot" style="left:935.5px;top:1308.5px;width:12px;height:12px;background:#d0d0d0"></div>
<div class="t " style="top:1308.4px;font-size:12px;left:1513px;transform:translateX(-100%);color:#929292;">输入亮度</div>
<div class="num numw" style="left:1519px;top:1304px;width:52px;height:21px;line-height:20.5px">0.00</div>
<div class="t " style="top:1308.4px;font-size:12px;left:1627px;transform:translateX(-100%);color:#929292;">饱和度</div>
<div class="num numw" style="left:1633px;top:1304px;width:52px;height:21px;line-height:20.5px">1.00</div>
<div class="a" style="left:1706px;top:950px;width:840px;height:385px;background:#28282e;"></div>
<div class="t b" style="top:961.9px;font-size:12px;left:1728px;color:#ededed;">调整大小</div>
<svg style="left:2235px;top:958.3px" width="18" height="18" viewBox="-9 -9 18 18" fill="none" stroke="#858585" stroke-width="1.15"><path d="M-6.11 -1.52 A6.3 6.3 0 1 1 -6.06 1.74"/><path d="M-6.31 -5.72 L-6.31 -1.22 L-1.81 -1.22" stroke-linejoin="miter"/></svg>
<div class="ln" style="left:1989px;top:1007px;width:1px;height:312px;background:#111113"></div>
<div class="ln" style="left:2273px;top:950px;width:1px;height:385px;background:#0b0b0d"></div>
<div class="t " style="top:1013.9px;font-size:12px;left:1788px;transform:translateX(-100%);color:#929292;">平移</div>
<div class="a" style="left:1805px;top:1019.5px;width:93px;height:2.5px;background:#1b1b1e;border-radius:1px"></div>
<div class="dot" style="left:1846.9px;top:1015.9px;width:9.2px;height:9.2px;background:#9a9a9a"></div>
<div class="num numw" style="left:1912px;top:1010px;width:57px;height:20px;line-height:19.6px;font-size:12.5px">0.000</div>
<div class="t " style="top:1045.9px;font-size:12px;left:1788px;transform:translateX(-100%);color:#929292;">竖移</div>
<div class="a" style="left:1805px;top:1051.5px;width:93px;height:2.5px;background:#1b1b1e;border-radius:1px"></div>
<div class="dot" style="left:1846.9px;top:1047.9px;width:9.2px;height:9.2px;background:#9a9a9a"></div>
<div class="num numw" style="left:1912px;top:1042px;width:57px;height:20px;line-height:19.6px;font-size:12.5px">0.000</div>
<div class="t " style="top:1077.9px;font-size:12px;left:1788px;transform:translateX(-100%);color:#929292;">缩放</div>
<div class="a" style="left:1805px;top:1083.5px;width:93px;height:2.5px;background:#1b1b1e;border-radius:1px"></div>
<div class="dot" style="left:1819.9px;top:1079.9px;width:9.2px;height:9.2px;background:#9a9a9a"></div>
<div class="num numw" style="left:1912px;top:1074px;width:57px;height:20px;line-height:19.6px;font-size:12.5px">1.000</div>
<div class="t " style="top:1109.9px;font-size:12px;left:1788px;transform:translateX(-100%);color:#929292;">旋转</div>
<div class="a" style="left:1805px;top:1115.5px;width:93px;height:2.5px;background:#1b1b1e;border-radius:1px"></div>
<div class="dot" style="left:1846.9px;top:1111.9px;width:9.2px;height:9.2px;background:#9a9a9a"></div>
<div class="num numw" style="left:1912px;top:1106px;width:57px;height:20px;line-height:19.6px;font-size:12.5px">0.000</div>
<div class="t " style="top:1013.9px;font-size:12px;left:2072px;transform:translateX(-100%);color:#929292;">宽度</div>
<div class="a" style="left:2089px;top:1019.5px;width:93px;height:2.5px;background:#1b1b1e;border-radius:1px"></div>
<div class="dot" style="left:2103.9px;top:1015.9px;width:9.2px;height:9.2px;background:#9a9a9a"></div>
<div class="num numw" style="left:2196px;top:1010px;width:57px;height:20px;line-height:19.6px;font-size:12.5px">1.000</div>
<div class="t " style="top:1045.9px;font-size:12px;left:2072px;transform:translateX(-100%);color:#929292;">高度</div>
<div class="a" style="left:2089px;top:1051.5px;width:93px;height:2.5px;background:#1b1b1e;border-radius:1px"></div>
<div class="dot" style="left:2103.9px;top:1047.9px;width:9.2px;height:9.2px;background:#9a9a9a"></div>
<div class="num numw" style="left:2196px;top:1042px;width:57px;height:20px;line-height:19.6px;font-size:12.5px">1.000</div>
<div class="t " style="top:1077.9px;font-size:12px;left:2072px;transform:translateX(-100%);color:#929292;">侧轴旋转</div>
<div class="a" style="left:2089px;top:1083.5px;width:93px;height:2.5px;background:#1b1b1e;border-radius:1px"></div>
<div class="dot" style="left:2130.9px;top:1079.9px;width:9.2px;height:9.2px;background:#9a9a9a"></div>
<div class="num numw" style="left:2196px;top:1074px;width:57px;height:20px;line-height:19.6px;font-size:12.5px">0.000</div>
<div class="t " style="top:1109.9px;font-size:12px;left:2072px;transform:translateX(-100%);color:#929292;">竖轴旋转</div>
<div class="a" style="left:2089px;top:1115.5px;width:93px;height:2.5px;background:#1b1b1e;border-radius:1px"></div>
<div class="dot" style="left:2130.9px;top:1111.9px;width:9.2px;height:9.2px;background:#9a9a9a"></div>
<div class="num numw" style="left:2196px;top:1106px;width:57px;height:20px;line-height:19.6px;font-size:12.5px">0.000</div>
<div class="t " style="top:1142.9px;font-size:12px;left:2072px;transform:translateX(-100%);color:#929292;">翻转</div>
<div class="a" style="left:2089px;top:1139px;width:21px;height:20px;border:1px solid #77777c;border-radius:3px"></div>
<svg style="left:2089px;top:1139px" width="21" height="20" viewBox="0 0 21 20"><path d="M10.5 3.5 V16.5" stroke="#9a9a9a" stroke-width="1"/><path d="M4 7 L8 10 L4 13 Z M17 7 L13 10 L17 13 Z" fill="#9a9a9a"/></svg>
<div class="a" style="left:2128px;top:1139px;width:21px;height:20px;border:1px solid #77777c;border-radius:3px"></div>
<svg style="left:2128px;top:1139px" width="21" height="20" viewBox="0 0 21 20"><path d="M4 10 H17" stroke="#9a9a9a" stroke-width="1"/><path d="M7.5 3.5 L10.5 7.5 L13.5 3.5 Z M7.5 16.5 L10.5 12.5 L13.5 16.5 Z" fill="#9a9a9a"/></svg>
<div class="t b" style="top:961.9px;font-size:12px;left:2296px;color:#ededed;">黑边</div>
<svg style="left:2520px;top:958.3px" width="18" height="18" viewBox="-9 -9 18 18" fill="none" stroke="#45454a" stroke-width="1.15"><path d="M-6.11 -1.52 A6.3 6.3 0 1 1 -6.06 1.74"/><path d="M-6.31 -5.72 L-6.31 -1.22 L-1.81 -1.22" stroke-linejoin="miter"/></svg>
<div class="t " style="top:1013.9px;font-size:12px;left:2356px;transform:translateX(-100%);color:#55555a;">顶部</div>
<div class="a" style="left:2374px;top:1019.5px;width:93px;height:2.5px;background:#232327;border-radius:1px"></div>
<div class="dot" style="left:2369.9px;top:1015.9px;width:9.2px;height:9.2px;background:#5c5c60"></div>
<div class="num" style="left:2481px;top:1010px;width:57px;height:20px;background:#232327;border-color:#141416"></div>
<div class="t " style="top:1045.9px;font-size:12px;left:2356px;transform:translateX(-100%);color:#55555a;">右侧</div>
<div class="a" style="left:2374px;top:1051.5px;width:93px;height:2.5px;background:#232327;border-radius:1px"></div>
<div class="dot" style="left:2369.9px;top:1047.9px;width:9.2px;height:9.2px;background:#5c5c60"></div>
<div class="num" style="left:2481px;top:1042px;width:57px;height:20px;background:#232327;border-color:#141416"></div>
<div class="t " style="top:1077.9px;font-size:12px;left:2356px;transform:translateX(-100%);color:#55555a;">底部</div>
<div class="a" style="left:2374px;top:1083.5px;width:93px;height:2.5px;background:#232327;border-radius:1px"></div>
<div class="dot" style="left:2369.9px;top:1079.9px;width:9.2px;height:9.2px;background:#5c5c60"></div>
<div class="num" style="left:2481px;top:1074px;width:57px;height:20px;background:#232327;border-color:#141416"></div>
<div class="t " style="top:1109.9px;font-size:12px;left:2356px;transform:translateX(-100%);color:#55555a;">左侧</div>
<div class="a" style="left:2374px;top:1115.5px;width:93px;height:2.5px;background:#232327;border-radius:1px"></div>
<div class="dot" style="left:2369.9px;top:1111.9px;width:9.2px;height:9.2px;background:#5c5c60"></div>
<div class="num" style="left:2481px;top:1106px;width:57px;height:20px;background:#232327;border-color:#141416"></div>
<div class="a" style="left:2369px;top:1138px;width:15px;height:15px;background:#232327;border:1px solid #141416;border-radius:2px"></div>
<div class="t " style="top:1139.4px;font-size:12px;left:2394px;color:#55555a;">平滑</div>
<svg style="left:14.3px;top:1302.9px" width="24" height="24" viewBox="-12 -12 24 24" ><g transform="scale(0.96) rotate(-43.8)" fill="#fff" stroke="#000" stroke-width="1.6" paint-order="stroke" stroke-linejoin="round"><path d="M-10.4 -0.35 L-7.4 -1.5 L3 -1.5 L3 1.5 L-7.4 1.5 L-10.4 0.35 Z" fill="#fff"/><rect x="2.7" y="-3.5" width="2.2" height="7"/><path d="M4.9 -1.8 H9.4 Q10.4 -1.8 10.4 -0.8 V0.8 Q10.4 1.8 9.4 1.8 H4.9 Z"/></g></svg>
<svg style="left:15.9px;top:1306.4px" width="8" height="10" viewBox="0 0 8 10" ><path d="M3.5 1 Q6.3 4.6 6.3 6.2 Q6.3 8.6 3.5 8.6 Q0.7 8.6 0.7 6.2 Q0.7 4.6 3.5 1 Z" fill="#fff" stroke="#000" stroke-width="1.4" paint-order="stroke" stroke-linejoin="round"/></svg>
<svg style="left:874.5px;top:1306px" width="16" height="16" viewBox="-8 -8 16 16" ><g stroke="#6e6e72" fill="none"><path d="M-6 6 L6 -6" stroke-width="1.2"/><circle cx="0" cy="0" r="3.2" stroke-width="1" fill="#2e2e34"/><circle cx="0" cy="0" r="1.1" fill="#6e6e72" stroke="none"/><rect x="4.4" y="-7.2" width="2.8" height="2.8" fill="#6e6e72" stroke="none"/><rect x="-7.2" y="4.4" width="2.8" height="2.8" fill="#6e6e72" stroke="none"/></g></svg>
</div></body></html>
